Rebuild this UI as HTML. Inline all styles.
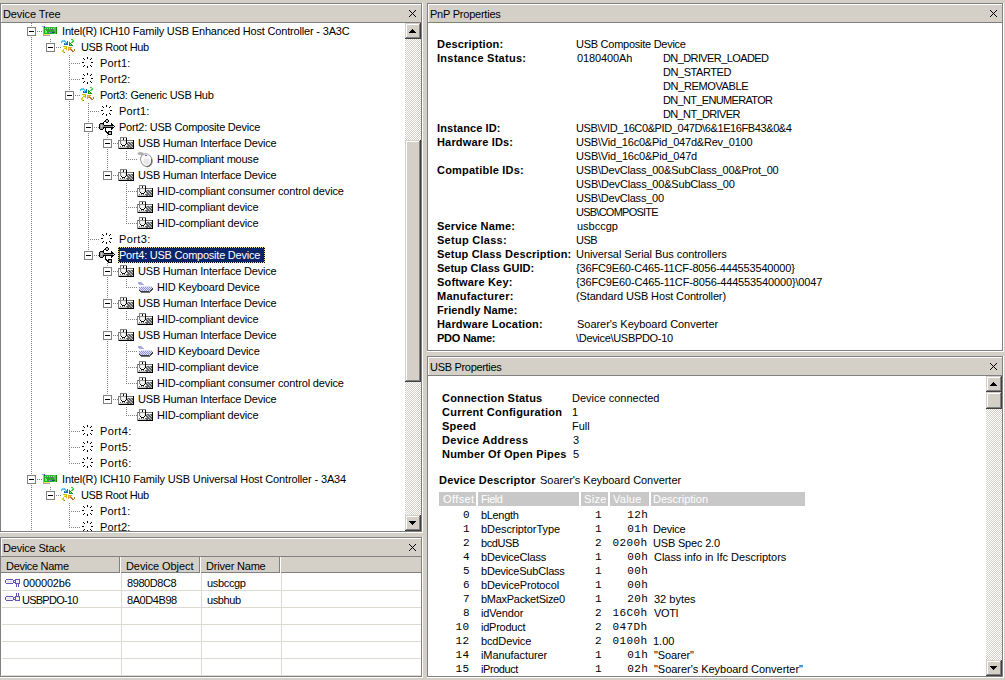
<!DOCTYPE html>
<html><head><meta charset="utf-8"><style>
html,body{margin:0;padding:0}
body{width:1005px;height:680px;overflow:hidden;position:relative;background:#d4d0c8;font-family:'Liberation Sans', sans-serif}
.t,.b,.m{position:absolute;white-space:pre;font-size:11px;line-height:13px}
.t{font-family:'Liberation Sans', sans-serif}
.b{font-family:'Liberation Sans', sans-serif;font-weight:bold}
.m{font-family:'Liberation Mono', monospace}
</style></head><body>
<div style="position:absolute;left:0px;top:3px;width:423px;height:530px;background:#fff;"></div>
<div style="position:absolute;left:0px;top:3px;width:422px;height:529px;background:#808080;"></div>
<div style="position:absolute;left:1px;top:4px;width:421px;height:528px;background:#808080;"></div>
<div style="position:absolute;left:1px;top:4px;width:420px;height:527px;background:#fff;"></div>
<div style="position:absolute;left:2px;top:5px;width:419px;height:526px;background:#fff;"></div>
<div style="position:absolute;left:2px;top:5px;width:419px;height:17px;background:#d4d0c8;"></div>
<div style="position:absolute;left:1px;top:22px;width:420px;height:1px;background:#808080;"></div>
<svg style="position:absolute;left:409px;top:10px" width="7" height="7" shape-rendering="crispEdges"><path d="M0 0h1v1h-1zM1 1h1v1h-1zM2 2h1v1h-1zM3 3h1v1h-1zM4 4h1v1h-1zM5 5h1v1h-1zM6 6h1v1h-1zM6 0h1v1h-1zM5 1h1v1h-1zM4 2h1v1h-1zM2 4h1v1h-1zM1 5h1v1h-1zM0 6h1v1h-1z" fill="#000"/></svg>
<div style="position:absolute;left:0px;top:537px;width:423px;height:141px;background:#fff;"></div>
<div style="position:absolute;left:0px;top:537px;width:422px;height:140px;background:#808080;"></div>
<div style="position:absolute;left:1px;top:538px;width:421px;height:139px;background:#808080;"></div>
<div style="position:absolute;left:1px;top:538px;width:420px;height:138px;background:#fff;"></div>
<div style="position:absolute;left:2px;top:539px;width:419px;height:137px;background:#fff;"></div>
<div style="position:absolute;left:2px;top:539px;width:419px;height:17px;background:#d4d0c8;"></div>
<div style="position:absolute;left:1px;top:556px;width:420px;height:1px;background:#808080;"></div>
<svg style="position:absolute;left:409px;top:544px" width="7" height="7" shape-rendering="crispEdges"><path d="M0 0h1v1h-1zM1 1h1v1h-1zM2 2h1v1h-1zM3 3h1v1h-1zM4 4h1v1h-1zM5 5h1v1h-1zM6 6h1v1h-1zM6 0h1v1h-1zM5 1h1v1h-1zM4 2h1v1h-1zM2 4h1v1h-1zM1 5h1v1h-1zM0 6h1v1h-1z" fill="#000"/></svg>
<div style="position:absolute;left:427px;top:3px;width:577px;height:349px;background:#fff;"></div>
<div style="position:absolute;left:427px;top:3px;width:576px;height:348px;background:#808080;"></div>
<div style="position:absolute;left:428px;top:4px;width:575px;height:347px;background:#808080;"></div>
<div style="position:absolute;left:428px;top:4px;width:574px;height:346px;background:#fff;"></div>
<div style="position:absolute;left:429px;top:5px;width:573px;height:345px;background:#fff;"></div>
<div style="position:absolute;left:429px;top:5px;width:573px;height:17px;background:#d4d0c8;"></div>
<div style="position:absolute;left:428px;top:22px;width:574px;height:1px;background:#808080;"></div>
<svg style="position:absolute;left:990px;top:10px" width="7" height="7" shape-rendering="crispEdges"><path d="M0 0h1v1h-1zM1 1h1v1h-1zM2 2h1v1h-1zM3 3h1v1h-1zM4 4h1v1h-1zM5 5h1v1h-1zM6 6h1v1h-1zM6 0h1v1h-1zM5 1h1v1h-1zM4 2h1v1h-1zM2 4h1v1h-1zM1 5h1v1h-1zM0 6h1v1h-1z" fill="#000"/></svg>
<div style="position:absolute;left:427px;top:356px;width:577px;height:322px;background:#fff;"></div>
<div style="position:absolute;left:427px;top:356px;width:576px;height:321px;background:#808080;"></div>
<div style="position:absolute;left:428px;top:357px;width:575px;height:320px;background:#808080;"></div>
<div style="position:absolute;left:428px;top:357px;width:574px;height:319px;background:#fff;"></div>
<div style="position:absolute;left:429px;top:358px;width:573px;height:318px;background:#fff;"></div>
<div style="position:absolute;left:429px;top:358px;width:573px;height:17px;background:#d4d0c8;"></div>
<div style="position:absolute;left:428px;top:375px;width:574px;height:1px;background:#808080;"></div>
<svg style="position:absolute;left:990px;top:363px" width="7" height="7" shape-rendering="crispEdges"><path d="M0 0h1v1h-1zM1 1h1v1h-1zM2 2h1v1h-1zM3 3h1v1h-1zM4 4h1v1h-1zM5 5h1v1h-1zM6 6h1v1h-1zM6 0h1v1h-1zM5 1h1v1h-1zM4 2h1v1h-1zM2 4h1v1h-1zM1 5h1v1h-1zM0 6h1v1h-1z" fill="#000"/></svg>
<svg style="position:absolute;left:0;top:0;clip-path:inset(23px 0 0 2px)" width="405" height="531" shape-rendering="crispEdges"><path d="M31 23h1v1h-1zM31 25h1v1h-1zM31 27h1v1h-1zM31 29h1v1h-1zM31 31h1v1h-1zM31 31h1v1h-1zM31 33h1v1h-1zM31 35h1v1h-1zM31 37h1v1h-1zM33 31h1v1h-1zM35 31h1v1h-1zM37 31h1v1h-1zM39 31h1v1h-1zM41 31h1v1h-1zM50 39h1v1h-1zM50 41h1v1h-1zM50 43h1v1h-1zM50 45h1v1h-1zM50 47h1v1h-1zM31 39h1v1h-1zM31 41h1v1h-1zM31 43h1v1h-1zM31 45h1v1h-1zM31 47h1v1h-1zM31 49h1v1h-1zM31 51h1v1h-1zM31 53h1v1h-1zM52 47h1v1h-1zM54 47h1v1h-1zM56 47h1v1h-1zM58 47h1v1h-1zM60 47h1v1h-1zM69 55h1v1h-1zM69 57h1v1h-1zM69 59h1v1h-1zM69 61h1v1h-1zM69 63h1v1h-1zM69 63h1v1h-1zM69 65h1v1h-1zM69 67h1v1h-1zM69 69h1v1h-1zM31 55h1v1h-1zM31 57h1v1h-1zM31 59h1v1h-1zM31 61h1v1h-1zM31 63h1v1h-1zM31 65h1v1h-1zM31 67h1v1h-1zM31 69h1v1h-1zM71 63h1v1h-1zM73 63h1v1h-1zM75 63h1v1h-1zM77 63h1v1h-1zM79 63h1v1h-1zM69 71h1v1h-1zM69 73h1v1h-1zM69 75h1v1h-1zM69 77h1v1h-1zM69 79h1v1h-1zM69 79h1v1h-1zM69 81h1v1h-1zM69 83h1v1h-1zM69 85h1v1h-1zM31 71h1v1h-1zM31 73h1v1h-1zM31 75h1v1h-1zM31 77h1v1h-1zM31 79h1v1h-1zM31 81h1v1h-1zM31 83h1v1h-1zM31 85h1v1h-1zM71 79h1v1h-1zM73 79h1v1h-1zM75 79h1v1h-1zM77 79h1v1h-1zM79 79h1v1h-1zM69 87h1v1h-1zM69 89h1v1h-1zM69 91h1v1h-1zM69 93h1v1h-1zM69 95h1v1h-1zM69 95h1v1h-1zM69 97h1v1h-1zM69 99h1v1h-1zM69 101h1v1h-1zM31 87h1v1h-1zM31 89h1v1h-1zM31 91h1v1h-1zM31 93h1v1h-1zM31 95h1v1h-1zM31 97h1v1h-1zM31 99h1v1h-1zM31 101h1v1h-1zM71 95h1v1h-1zM73 95h1v1h-1zM75 95h1v1h-1zM77 95h1v1h-1zM79 95h1v1h-1zM88 103h1v1h-1zM88 105h1v1h-1zM88 107h1v1h-1zM88 109h1v1h-1zM88 111h1v1h-1zM88 111h1v1h-1zM88 113h1v1h-1zM88 115h1v1h-1zM88 117h1v1h-1zM31 103h1v1h-1zM31 105h1v1h-1zM31 107h1v1h-1zM31 109h1v1h-1zM31 111h1v1h-1zM31 113h1v1h-1zM31 115h1v1h-1zM31 117h1v1h-1zM69 103h1v1h-1zM69 105h1v1h-1zM69 107h1v1h-1zM69 109h1v1h-1zM69 111h1v1h-1zM69 113h1v1h-1zM69 115h1v1h-1zM69 117h1v1h-1zM90 111h1v1h-1zM92 111h1v1h-1zM94 111h1v1h-1zM96 111h1v1h-1zM98 111h1v1h-1zM88 119h1v1h-1zM88 121h1v1h-1zM88 123h1v1h-1zM88 125h1v1h-1zM88 127h1v1h-1zM88 127h1v1h-1zM88 129h1v1h-1zM88 131h1v1h-1zM88 133h1v1h-1zM31 119h1v1h-1zM31 121h1v1h-1zM31 123h1v1h-1zM31 125h1v1h-1zM31 127h1v1h-1zM31 129h1v1h-1zM31 131h1v1h-1zM31 133h1v1h-1zM69 119h1v1h-1zM69 121h1v1h-1zM69 123h1v1h-1zM69 125h1v1h-1zM69 127h1v1h-1zM69 129h1v1h-1zM69 131h1v1h-1zM69 133h1v1h-1zM90 127h1v1h-1zM92 127h1v1h-1zM94 127h1v1h-1zM96 127h1v1h-1zM98 127h1v1h-1zM107 135h1v1h-1zM107 137h1v1h-1zM107 139h1v1h-1zM107 141h1v1h-1zM107 143h1v1h-1zM107 143h1v1h-1zM107 145h1v1h-1zM107 147h1v1h-1zM107 149h1v1h-1zM31 135h1v1h-1zM31 137h1v1h-1zM31 139h1v1h-1zM31 141h1v1h-1zM31 143h1v1h-1zM31 145h1v1h-1zM31 147h1v1h-1zM31 149h1v1h-1zM69 135h1v1h-1zM69 137h1v1h-1zM69 139h1v1h-1zM69 141h1v1h-1zM69 143h1v1h-1zM69 145h1v1h-1zM69 147h1v1h-1zM69 149h1v1h-1zM88 135h1v1h-1zM88 137h1v1h-1zM88 139h1v1h-1zM88 141h1v1h-1zM88 143h1v1h-1zM88 145h1v1h-1zM88 147h1v1h-1zM88 149h1v1h-1zM109 143h1v1h-1zM111 143h1v1h-1zM113 143h1v1h-1zM115 143h1v1h-1zM117 143h1v1h-1zM126 151h1v1h-1zM126 153h1v1h-1zM126 155h1v1h-1zM126 157h1v1h-1zM126 159h1v1h-1zM31 151h1v1h-1zM31 153h1v1h-1zM31 155h1v1h-1zM31 157h1v1h-1zM31 159h1v1h-1zM31 161h1v1h-1zM31 163h1v1h-1zM31 165h1v1h-1zM69 151h1v1h-1zM69 153h1v1h-1zM69 155h1v1h-1zM69 157h1v1h-1zM69 159h1v1h-1zM69 161h1v1h-1zM69 163h1v1h-1zM69 165h1v1h-1zM88 151h1v1h-1zM88 153h1v1h-1zM88 155h1v1h-1zM88 157h1v1h-1zM88 159h1v1h-1zM88 161h1v1h-1zM88 163h1v1h-1zM88 165h1v1h-1zM107 151h1v1h-1zM107 153h1v1h-1zM107 155h1v1h-1zM107 157h1v1h-1zM107 159h1v1h-1zM107 161h1v1h-1zM107 163h1v1h-1zM107 165h1v1h-1zM128 159h1v1h-1zM130 159h1v1h-1zM132 159h1v1h-1zM134 159h1v1h-1zM136 159h1v1h-1zM107 167h1v1h-1zM107 169h1v1h-1zM107 171h1v1h-1zM107 173h1v1h-1zM107 175h1v1h-1zM31 167h1v1h-1zM31 169h1v1h-1zM31 171h1v1h-1zM31 173h1v1h-1zM31 175h1v1h-1zM31 177h1v1h-1zM31 179h1v1h-1zM31 181h1v1h-1zM69 167h1v1h-1zM69 169h1v1h-1zM69 171h1v1h-1zM69 173h1v1h-1zM69 175h1v1h-1zM69 177h1v1h-1zM69 179h1v1h-1zM69 181h1v1h-1zM88 167h1v1h-1zM88 169h1v1h-1zM88 171h1v1h-1zM88 173h1v1h-1zM88 175h1v1h-1zM88 177h1v1h-1zM88 179h1v1h-1zM88 181h1v1h-1zM109 175h1v1h-1zM111 175h1v1h-1zM113 175h1v1h-1zM115 175h1v1h-1zM117 175h1v1h-1zM126 183h1v1h-1zM126 185h1v1h-1zM126 187h1v1h-1zM126 189h1v1h-1zM126 191h1v1h-1zM126 191h1v1h-1zM126 193h1v1h-1zM126 195h1v1h-1zM126 197h1v1h-1zM31 183h1v1h-1zM31 185h1v1h-1zM31 187h1v1h-1zM31 189h1v1h-1zM31 191h1v1h-1zM31 193h1v1h-1zM31 195h1v1h-1zM31 197h1v1h-1zM69 183h1v1h-1zM69 185h1v1h-1zM69 187h1v1h-1zM69 189h1v1h-1zM69 191h1v1h-1zM69 193h1v1h-1zM69 195h1v1h-1zM69 197h1v1h-1zM88 183h1v1h-1zM88 185h1v1h-1zM88 187h1v1h-1zM88 189h1v1h-1zM88 191h1v1h-1zM88 193h1v1h-1zM88 195h1v1h-1zM88 197h1v1h-1zM128 191h1v1h-1zM130 191h1v1h-1zM132 191h1v1h-1zM134 191h1v1h-1zM136 191h1v1h-1zM126 199h1v1h-1zM126 201h1v1h-1zM126 203h1v1h-1zM126 205h1v1h-1zM126 207h1v1h-1zM126 207h1v1h-1zM126 209h1v1h-1zM126 211h1v1h-1zM126 213h1v1h-1zM31 199h1v1h-1zM31 201h1v1h-1zM31 203h1v1h-1zM31 205h1v1h-1zM31 207h1v1h-1zM31 209h1v1h-1zM31 211h1v1h-1zM31 213h1v1h-1zM69 199h1v1h-1zM69 201h1v1h-1zM69 203h1v1h-1zM69 205h1v1h-1zM69 207h1v1h-1zM69 209h1v1h-1zM69 211h1v1h-1zM69 213h1v1h-1zM88 199h1v1h-1zM88 201h1v1h-1zM88 203h1v1h-1zM88 205h1v1h-1zM88 207h1v1h-1zM88 209h1v1h-1zM88 211h1v1h-1zM88 213h1v1h-1zM128 207h1v1h-1zM130 207h1v1h-1zM132 207h1v1h-1zM134 207h1v1h-1zM136 207h1v1h-1zM126 215h1v1h-1zM126 217h1v1h-1zM126 219h1v1h-1zM126 221h1v1h-1zM126 223h1v1h-1zM31 215h1v1h-1zM31 217h1v1h-1zM31 219h1v1h-1zM31 221h1v1h-1zM31 223h1v1h-1zM31 225h1v1h-1zM31 227h1v1h-1zM31 229h1v1h-1zM69 215h1v1h-1zM69 217h1v1h-1zM69 219h1v1h-1zM69 221h1v1h-1zM69 223h1v1h-1zM69 225h1v1h-1zM69 227h1v1h-1zM69 229h1v1h-1zM88 215h1v1h-1zM88 217h1v1h-1zM88 219h1v1h-1zM88 221h1v1h-1zM88 223h1v1h-1zM88 225h1v1h-1zM88 227h1v1h-1zM88 229h1v1h-1zM128 223h1v1h-1zM130 223h1v1h-1zM132 223h1v1h-1zM134 223h1v1h-1zM136 223h1v1h-1zM88 231h1v1h-1zM88 233h1v1h-1zM88 235h1v1h-1zM88 237h1v1h-1zM88 239h1v1h-1zM88 239h1v1h-1zM88 241h1v1h-1zM88 243h1v1h-1zM88 245h1v1h-1zM31 231h1v1h-1zM31 233h1v1h-1zM31 235h1v1h-1zM31 237h1v1h-1zM31 239h1v1h-1zM31 241h1v1h-1zM31 243h1v1h-1zM31 245h1v1h-1zM69 231h1v1h-1zM69 233h1v1h-1zM69 235h1v1h-1zM69 237h1v1h-1zM69 239h1v1h-1zM69 241h1v1h-1zM69 243h1v1h-1zM69 245h1v1h-1zM90 239h1v1h-1zM92 239h1v1h-1zM94 239h1v1h-1zM96 239h1v1h-1zM98 239h1v1h-1zM88 247h1v1h-1zM88 249h1v1h-1zM88 251h1v1h-1zM88 253h1v1h-1zM88 255h1v1h-1zM31 247h1v1h-1zM31 249h1v1h-1zM31 251h1v1h-1zM31 253h1v1h-1zM31 255h1v1h-1zM31 257h1v1h-1zM31 259h1v1h-1zM31 261h1v1h-1zM69 247h1v1h-1zM69 249h1v1h-1zM69 251h1v1h-1zM69 253h1v1h-1zM69 255h1v1h-1zM69 257h1v1h-1zM69 259h1v1h-1zM69 261h1v1h-1zM90 255h1v1h-1zM92 255h1v1h-1zM94 255h1v1h-1zM96 255h1v1h-1zM98 255h1v1h-1zM107 263h1v1h-1zM107 265h1v1h-1zM107 267h1v1h-1zM107 269h1v1h-1zM107 271h1v1h-1zM107 271h1v1h-1zM107 273h1v1h-1zM107 275h1v1h-1zM107 277h1v1h-1zM31 263h1v1h-1zM31 265h1v1h-1zM31 267h1v1h-1zM31 269h1v1h-1zM31 271h1v1h-1zM31 273h1v1h-1zM31 275h1v1h-1zM31 277h1v1h-1zM69 263h1v1h-1zM69 265h1v1h-1zM69 267h1v1h-1zM69 269h1v1h-1zM69 271h1v1h-1zM69 273h1v1h-1zM69 275h1v1h-1zM69 277h1v1h-1zM109 271h1v1h-1zM111 271h1v1h-1zM113 271h1v1h-1zM115 271h1v1h-1zM117 271h1v1h-1zM126 279h1v1h-1zM126 281h1v1h-1zM126 283h1v1h-1zM126 285h1v1h-1zM126 287h1v1h-1zM31 279h1v1h-1zM31 281h1v1h-1zM31 283h1v1h-1zM31 285h1v1h-1zM31 287h1v1h-1zM31 289h1v1h-1zM31 291h1v1h-1zM31 293h1v1h-1zM69 279h1v1h-1zM69 281h1v1h-1zM69 283h1v1h-1zM69 285h1v1h-1zM69 287h1v1h-1zM69 289h1v1h-1zM69 291h1v1h-1zM69 293h1v1h-1zM107 279h1v1h-1zM107 281h1v1h-1zM107 283h1v1h-1zM107 285h1v1h-1zM107 287h1v1h-1zM107 289h1v1h-1zM107 291h1v1h-1zM107 293h1v1h-1zM128 287h1v1h-1zM130 287h1v1h-1zM132 287h1v1h-1zM134 287h1v1h-1zM136 287h1v1h-1zM107 295h1v1h-1zM107 297h1v1h-1zM107 299h1v1h-1zM107 301h1v1h-1zM107 303h1v1h-1zM107 303h1v1h-1zM107 305h1v1h-1zM107 307h1v1h-1zM107 309h1v1h-1zM31 295h1v1h-1zM31 297h1v1h-1zM31 299h1v1h-1zM31 301h1v1h-1zM31 303h1v1h-1zM31 305h1v1h-1zM31 307h1v1h-1zM31 309h1v1h-1zM69 295h1v1h-1zM69 297h1v1h-1zM69 299h1v1h-1zM69 301h1v1h-1zM69 303h1v1h-1zM69 305h1v1h-1zM69 307h1v1h-1zM69 309h1v1h-1zM109 303h1v1h-1zM111 303h1v1h-1zM113 303h1v1h-1zM115 303h1v1h-1zM117 303h1v1h-1zM126 311h1v1h-1zM126 313h1v1h-1zM126 315h1v1h-1zM126 317h1v1h-1zM126 319h1v1h-1zM31 311h1v1h-1zM31 313h1v1h-1zM31 315h1v1h-1zM31 317h1v1h-1zM31 319h1v1h-1zM31 321h1v1h-1zM31 323h1v1h-1zM31 325h1v1h-1zM69 311h1v1h-1zM69 313h1v1h-1zM69 315h1v1h-1zM69 317h1v1h-1zM69 319h1v1h-1zM69 321h1v1h-1zM69 323h1v1h-1zM69 325h1v1h-1zM107 311h1v1h-1zM107 313h1v1h-1zM107 315h1v1h-1zM107 317h1v1h-1zM107 319h1v1h-1zM107 321h1v1h-1zM107 323h1v1h-1zM107 325h1v1h-1zM128 319h1v1h-1zM130 319h1v1h-1zM132 319h1v1h-1zM134 319h1v1h-1zM136 319h1v1h-1zM107 327h1v1h-1zM107 329h1v1h-1zM107 331h1v1h-1zM107 333h1v1h-1zM107 335h1v1h-1zM107 335h1v1h-1zM107 337h1v1h-1zM107 339h1v1h-1zM107 341h1v1h-1zM31 327h1v1h-1zM31 329h1v1h-1zM31 331h1v1h-1zM31 333h1v1h-1zM31 335h1v1h-1zM31 337h1v1h-1zM31 339h1v1h-1zM31 341h1v1h-1zM69 327h1v1h-1zM69 329h1v1h-1zM69 331h1v1h-1zM69 333h1v1h-1zM69 335h1v1h-1zM69 337h1v1h-1zM69 339h1v1h-1zM69 341h1v1h-1zM109 335h1v1h-1zM111 335h1v1h-1zM113 335h1v1h-1zM115 335h1v1h-1zM117 335h1v1h-1zM126 343h1v1h-1zM126 345h1v1h-1zM126 347h1v1h-1zM126 349h1v1h-1zM126 351h1v1h-1zM126 351h1v1h-1zM126 353h1v1h-1zM126 355h1v1h-1zM126 357h1v1h-1zM31 343h1v1h-1zM31 345h1v1h-1zM31 347h1v1h-1zM31 349h1v1h-1zM31 351h1v1h-1zM31 353h1v1h-1zM31 355h1v1h-1zM31 357h1v1h-1zM69 343h1v1h-1zM69 345h1v1h-1zM69 347h1v1h-1zM69 349h1v1h-1zM69 351h1v1h-1zM69 353h1v1h-1zM69 355h1v1h-1zM69 357h1v1h-1zM107 343h1v1h-1zM107 345h1v1h-1zM107 347h1v1h-1zM107 349h1v1h-1zM107 351h1v1h-1zM107 353h1v1h-1zM107 355h1v1h-1zM107 357h1v1h-1zM128 351h1v1h-1zM130 351h1v1h-1zM132 351h1v1h-1zM134 351h1v1h-1zM136 351h1v1h-1zM126 359h1v1h-1zM126 361h1v1h-1zM126 363h1v1h-1zM126 365h1v1h-1zM126 367h1v1h-1zM126 367h1v1h-1zM126 369h1v1h-1zM126 371h1v1h-1zM126 373h1v1h-1zM31 359h1v1h-1zM31 361h1v1h-1zM31 363h1v1h-1zM31 365h1v1h-1zM31 367h1v1h-1zM31 369h1v1h-1zM31 371h1v1h-1zM31 373h1v1h-1zM69 359h1v1h-1zM69 361h1v1h-1zM69 363h1v1h-1zM69 365h1v1h-1zM69 367h1v1h-1zM69 369h1v1h-1zM69 371h1v1h-1zM69 373h1v1h-1zM107 359h1v1h-1zM107 361h1v1h-1zM107 363h1v1h-1zM107 365h1v1h-1zM107 367h1v1h-1zM107 369h1v1h-1zM107 371h1v1h-1zM107 373h1v1h-1zM128 367h1v1h-1zM130 367h1v1h-1zM132 367h1v1h-1zM134 367h1v1h-1zM136 367h1v1h-1zM126 375h1v1h-1zM126 377h1v1h-1zM126 379h1v1h-1zM126 381h1v1h-1zM126 383h1v1h-1zM31 375h1v1h-1zM31 377h1v1h-1zM31 379h1v1h-1zM31 381h1v1h-1zM31 383h1v1h-1zM31 385h1v1h-1zM31 387h1v1h-1zM31 389h1v1h-1zM69 375h1v1h-1zM69 377h1v1h-1zM69 379h1v1h-1zM69 381h1v1h-1zM69 383h1v1h-1zM69 385h1v1h-1zM69 387h1v1h-1zM69 389h1v1h-1zM107 375h1v1h-1zM107 377h1v1h-1zM107 379h1v1h-1zM107 381h1v1h-1zM107 383h1v1h-1zM107 385h1v1h-1zM107 387h1v1h-1zM107 389h1v1h-1zM128 383h1v1h-1zM130 383h1v1h-1zM132 383h1v1h-1zM134 383h1v1h-1zM136 383h1v1h-1zM107 391h1v1h-1zM107 393h1v1h-1zM107 395h1v1h-1zM107 397h1v1h-1zM107 399h1v1h-1zM31 391h1v1h-1zM31 393h1v1h-1zM31 395h1v1h-1zM31 397h1v1h-1zM31 399h1v1h-1zM31 401h1v1h-1zM31 403h1v1h-1zM31 405h1v1h-1zM69 391h1v1h-1zM69 393h1v1h-1zM69 395h1v1h-1zM69 397h1v1h-1zM69 399h1v1h-1zM69 401h1v1h-1zM69 403h1v1h-1zM69 405h1v1h-1zM109 399h1v1h-1zM111 399h1v1h-1zM113 399h1v1h-1zM115 399h1v1h-1zM117 399h1v1h-1zM126 407h1v1h-1zM126 409h1v1h-1zM126 411h1v1h-1zM126 413h1v1h-1zM126 415h1v1h-1zM31 407h1v1h-1zM31 409h1v1h-1zM31 411h1v1h-1zM31 413h1v1h-1zM31 415h1v1h-1zM31 417h1v1h-1zM31 419h1v1h-1zM31 421h1v1h-1zM69 407h1v1h-1zM69 409h1v1h-1zM69 411h1v1h-1zM69 413h1v1h-1zM69 415h1v1h-1zM69 417h1v1h-1zM69 419h1v1h-1zM69 421h1v1h-1zM128 415h1v1h-1zM130 415h1v1h-1zM132 415h1v1h-1zM134 415h1v1h-1zM136 415h1v1h-1zM69 423h1v1h-1zM69 425h1v1h-1zM69 427h1v1h-1zM69 429h1v1h-1zM69 431h1v1h-1zM69 431h1v1h-1zM69 433h1v1h-1zM69 435h1v1h-1zM69 437h1v1h-1zM31 423h1v1h-1zM31 425h1v1h-1zM31 427h1v1h-1zM31 429h1v1h-1zM31 431h1v1h-1zM31 433h1v1h-1zM31 435h1v1h-1zM31 437h1v1h-1zM71 431h1v1h-1zM73 431h1v1h-1zM75 431h1v1h-1zM77 431h1v1h-1zM79 431h1v1h-1zM69 439h1v1h-1zM69 441h1v1h-1zM69 443h1v1h-1zM69 445h1v1h-1zM69 447h1v1h-1zM69 447h1v1h-1zM69 449h1v1h-1zM69 451h1v1h-1zM69 453h1v1h-1zM31 439h1v1h-1zM31 441h1v1h-1zM31 443h1v1h-1zM31 445h1v1h-1zM31 447h1v1h-1zM31 449h1v1h-1zM31 451h1v1h-1zM31 453h1v1h-1zM71 447h1v1h-1zM73 447h1v1h-1zM75 447h1v1h-1zM77 447h1v1h-1zM79 447h1v1h-1zM69 455h1v1h-1zM69 457h1v1h-1zM69 459h1v1h-1zM69 461h1v1h-1zM69 463h1v1h-1zM31 455h1v1h-1zM31 457h1v1h-1zM31 459h1v1h-1zM31 461h1v1h-1zM31 463h1v1h-1zM31 465h1v1h-1zM31 467h1v1h-1zM31 469h1v1h-1zM71 463h1v1h-1zM73 463h1v1h-1zM75 463h1v1h-1zM77 463h1v1h-1zM79 463h1v1h-1zM31 471h1v1h-1zM31 473h1v1h-1zM31 475h1v1h-1zM31 477h1v1h-1zM31 479h1v1h-1zM31 479h1v1h-1zM31 481h1v1h-1zM31 483h1v1h-1zM31 485h1v1h-1zM33 479h1v1h-1zM35 479h1v1h-1zM37 479h1v1h-1zM39 479h1v1h-1zM41 479h1v1h-1zM50 487h1v1h-1zM50 489h1v1h-1zM50 491h1v1h-1zM50 493h1v1h-1zM50 495h1v1h-1zM31 487h1v1h-1zM31 489h1v1h-1zM31 491h1v1h-1zM31 493h1v1h-1zM31 495h1v1h-1zM31 497h1v1h-1zM31 499h1v1h-1zM31 501h1v1h-1zM52 495h1v1h-1zM54 495h1v1h-1zM56 495h1v1h-1zM58 495h1v1h-1zM60 495h1v1h-1zM69 503h1v1h-1zM69 505h1v1h-1zM69 507h1v1h-1zM69 509h1v1h-1zM69 511h1v1h-1zM69 511h1v1h-1zM69 513h1v1h-1zM69 515h1v1h-1zM69 517h1v1h-1zM31 503h1v1h-1zM31 505h1v1h-1zM31 507h1v1h-1zM31 509h1v1h-1zM31 511h1v1h-1zM31 513h1v1h-1zM31 515h1v1h-1zM31 517h1v1h-1zM71 511h1v1h-1zM73 511h1v1h-1zM75 511h1v1h-1zM77 511h1v1h-1zM79 511h1v1h-1zM69 519h1v1h-1zM69 521h1v1h-1zM69 523h1v1h-1zM69 525h1v1h-1zM69 527h1v1h-1zM31 519h1v1h-1zM31 521h1v1h-1zM31 523h1v1h-1zM31 525h1v1h-1zM31 527h1v1h-1zM31 529h1v1h-1zM31 531h1v1h-1zM31 533h1v1h-1zM71 527h1v1h-1zM73 527h1v1h-1zM75 527h1v1h-1zM77 527h1v1h-1zM79 527h1v1h-1z" fill="#808080"/><rect x="27" y="27" width="9" height="9" fill="#fff"/><path d="M27 27h9v1h-9zM27 35h9v1h-9zM27 27h1v9h-1zM35 27h1v9h-1z" fill="#808080"/><path d="M29 31h5v1h-5z" fill="#000"/><rect x="46" y="43" width="9" height="9" fill="#fff"/><path d="M46 43h9v1h-9zM46 51h9v1h-9zM46 43h1v9h-1zM54 43h1v9h-1z" fill="#808080"/><path d="M48 47h5v1h-5z" fill="#000"/><rect x="65" y="91" width="9" height="9" fill="#fff"/><path d="M65 91h9v1h-9zM65 99h9v1h-9zM65 91h1v9h-1zM73 91h1v9h-1z" fill="#808080"/><path d="M67 95h5v1h-5z" fill="#000"/><rect x="84" y="123" width="9" height="9" fill="#fff"/><path d="M84 123h9v1h-9zM84 131h9v1h-9zM84 123h1v9h-1zM92 123h1v9h-1z" fill="#808080"/><path d="M86 127h5v1h-5z" fill="#000"/><rect x="103" y="139" width="9" height="9" fill="#fff"/><path d="M103 139h9v1h-9zM103 147h9v1h-9zM103 139h1v9h-1zM111 139h1v9h-1z" fill="#808080"/><path d="M105 143h5v1h-5z" fill="#000"/><rect x="103" y="171" width="9" height="9" fill="#fff"/><path d="M103 171h9v1h-9zM103 179h9v1h-9zM103 171h1v9h-1zM111 171h1v9h-1z" fill="#808080"/><path d="M105 175h5v1h-5z" fill="#000"/><rect x="84" y="251" width="9" height="9" fill="#fff"/><path d="M84 251h9v1h-9zM84 259h9v1h-9zM84 251h1v9h-1zM92 251h1v9h-1z" fill="#808080"/><path d="M86 255h5v1h-5z" fill="#000"/><rect x="103" y="267" width="9" height="9" fill="#fff"/><path d="M103 267h9v1h-9zM103 275h9v1h-9zM103 267h1v9h-1zM111 267h1v9h-1z" fill="#808080"/><path d="M105 271h5v1h-5z" fill="#000"/><rect x="103" y="299" width="9" height="9" fill="#fff"/><path d="M103 299h9v1h-9zM103 307h9v1h-9zM103 299h1v9h-1zM111 299h1v9h-1z" fill="#808080"/><path d="M105 303h5v1h-5z" fill="#000"/><rect x="103" y="331" width="9" height="9" fill="#fff"/><path d="M103 331h9v1h-9zM103 339h9v1h-9zM103 331h1v9h-1zM111 331h1v9h-1z" fill="#808080"/><path d="M105 335h5v1h-5z" fill="#000"/><rect x="103" y="395" width="9" height="9" fill="#fff"/><path d="M103 395h9v1h-9zM103 403h9v1h-9zM103 395h1v9h-1zM111 395h1v9h-1z" fill="#808080"/><path d="M105 399h5v1h-5z" fill="#000"/><rect x="27" y="475" width="9" height="9" fill="#fff"/><path d="M27 475h9v1h-9zM27 483h9v1h-9zM27 475h1v9h-1zM35 475h1v9h-1z" fill="#808080"/><path d="M29 479h5v1h-5z" fill="#000"/><rect x="46" y="491" width="9" height="9" fill="#fff"/><path d="M46 491h9v1h-9zM46 499h9v1h-9zM46 491h1v9h-1zM54 491h1v9h-1z" fill="#808080"/><path d="M48 495h5v1h-5z" fill="#000"/><g transform="translate(42 23)"><path d="M0 3h3v1h-3zM1 3h1v10h-1z" fill="#a8a8e0"/><path d="M2 3h1v1h-1z" fill="#505090"/>
<path d="M2 4h13v7h-13z" fill="#20b020"/><path d="M14 4h1v7h-1z" fill="#009000"/><path d="M3 4h11v1h-11z" fill="#30c030"/><path d="M12 4h2v7h-2z" fill="#50c050"/>
<path d="M4 6h2v1h-2zM7 6h5v1h-5zM11 8h2v1h-2zM6 9h1v1h-1z" fill="#806880"/><path d="M3 5h1v1h-1zM5 5h1v1h-1zM7 5h1v1h-1zM9 5h1v1h-1zM11 5h1v1h-1z" fill="#a0f0a0"/><path d="M3 8h1v2h-1z" fill="#f0a040"/><path d="M3 7h1v1h-1zM4 8h1v2h-1z" fill="#80ff80"/><path d="M7 9h1v1h-1z" fill="#e0a040"/><path d="M2 11h6v1h-6z" fill="#f0f060"/><path d="M1 12h7v1h-7z" fill="#a0a0c0"/><path d="M8 9h1v1h-1z" fill="#4080ff"/><path d="M10 9h3v1h-3z" fill="#107010"/><path d="M2 4h1v1h-1z" fill="#206080"/></g><g transform="translate(61 39)"><path d="M1 1h1v1h-1zM2 1h1v1h-1zM3 1h1v1h-1zM0 2h1v1h-1zM1 2h1v1h-1zM2 2h1v1h-1zM3 2h1v1h-1zM4 2h1v1h-1zM0 3h1v1h-1zM4 3h1v1h-1z" fill="#48c0f0"/><path d="M6 2h1v1h-1zM5 3h1v1h-1zM6 3h1v1h-1zM3 4h1v1h-1zM4 4h1v1h-1zM5 4h1v1h-1zM6 4h1v1h-1zM3 5h1v1h-1zM4 5h1v1h-1zM5 5h1v1h-1zM6 5h1v1h-1z" fill="#1870b8"/><path d="M4 4h1v1h-1zM5 3h1v1h-1z" fill="#58d8ff"/><path d="M2 1h1v1h-1z" fill="#90e8ff"/><path d="M10 0h1v1h-1zM11 0h1v1h-1zM11 1h1v1h-1zM12 1h1v1h-1zM11 2h1v1h-1zM12 2h1v1h-1zM10 3h1v1h-1zM11 3h1v1h-1zM9 4h1v1h-1z" fill="#40d040"/><path d="M8 3h1v1h-1zM8 4h1v1h-1zM9 4h1v1h-1zM8 5h1v1h-1zM9 5h1v1h-1zM10 5h1v1h-1zM8 6h1v1h-1zM9 6h1v1h-1zM10 6h1v1h-1zM11 6h1v1h-1z" fill="#0c9a0c"/><path d="M9 5h1v1h-1z" fill="#70ff70"/><path d="M11 1h1v1h-1z" fill="#90ff90"/><path d="M2 7h1v1h-1zM3 7h1v1h-1zM4 7h1v1h-1zM5 7h1v1h-1zM3 8h1v1h-1zM4 8h1v1h-1zM5 8h1v1h-1zM4 9h1v1h-1zM5 9h1v1h-1zM5 10h1v1h-1z" fill="#c8c010"/><path d="M4 8h1v1h-1zM3 8h1v1h-1z" fill="#ffff40"/><path d="M3 9h1v1h-1zM2 10h1v1h-1zM2 11h1v1h-1zM1 11h1v1h-1zM1 12h1v1h-1zM2 12h1v1h-1zM2 13h1v1h-1z" fill="#d8d020"/><path d="M3 13h1v1h-1z" fill="#809020"/><path d="M7 8h1v1h-1zM8 8h1v1h-1zM9 8h1v1h-1zM10 8h1v1h-1zM7 9h1v1h-1zM8 9h1v1h-1zM9 9h1v1h-1zM7 10h1v1h-1zM8 10h1v1h-1zM7 11h1v1h-1z" fill="#e8a030"/><path d="M8 9h1v1h-1z" fill="#ffc860"/><path d="M9 10h1v1h-1zM10 10h1v1h-1zM10 11h1v1h-1zM11 11h1v1h-1zM11 12h1v1h-1zM12 12h1v1h-1zM13 11h1v1h-1zM13 10h1v1h-1z" fill="#c07020"/></g><g transform="translate(80 55)"><path d="M7 2h1v2h-1zM7 11h1v2h-1zM2 7h2v1h-2zM11 7h2v1h-2zM3 3h1v1h-1zM4 4h1v1h-1zM11 3h1v1h-1zM10 4h1v1h-1zM4 10h1v1h-1zM3 11h1v1h-1zM10 10h1v1h-1zM11 11h1v1h-1z" fill="#000"/></g><g transform="translate(80 71)"><path d="M7 2h1v2h-1zM7 11h1v2h-1zM2 7h2v1h-2zM11 7h2v1h-2zM3 3h1v1h-1zM4 4h1v1h-1zM11 3h1v1h-1zM10 4h1v1h-1zM4 10h1v1h-1zM3 11h1v1h-1zM10 10h1v1h-1zM11 11h1v1h-1z" fill="#000"/></g><g transform="translate(80 87)"><path d="M1 1h1v1h-1zM2 1h1v1h-1zM3 1h1v1h-1zM0 2h1v1h-1zM1 2h1v1h-1zM2 2h1v1h-1zM3 2h1v1h-1zM4 2h1v1h-1zM0 3h1v1h-1zM4 3h1v1h-1z" fill="#48c0f0"/><path d="M6 2h1v1h-1zM5 3h1v1h-1zM6 3h1v1h-1zM3 4h1v1h-1zM4 4h1v1h-1zM5 4h1v1h-1zM6 4h1v1h-1zM3 5h1v1h-1zM4 5h1v1h-1zM5 5h1v1h-1zM6 5h1v1h-1z" fill="#1870b8"/><path d="M4 4h1v1h-1zM5 3h1v1h-1z" fill="#58d8ff"/><path d="M2 1h1v1h-1z" fill="#90e8ff"/><path d="M10 0h1v1h-1zM11 0h1v1h-1zM11 1h1v1h-1zM12 1h1v1h-1zM11 2h1v1h-1zM12 2h1v1h-1zM10 3h1v1h-1zM11 3h1v1h-1zM9 4h1v1h-1z" fill="#40d040"/><path d="M8 3h1v1h-1zM8 4h1v1h-1zM9 4h1v1h-1zM8 5h1v1h-1zM9 5h1v1h-1zM10 5h1v1h-1zM8 6h1v1h-1zM9 6h1v1h-1zM10 6h1v1h-1zM11 6h1v1h-1z" fill="#0c9a0c"/><path d="M9 5h1v1h-1z" fill="#70ff70"/><path d="M11 1h1v1h-1z" fill="#90ff90"/><path d="M2 7h1v1h-1zM3 7h1v1h-1zM4 7h1v1h-1zM5 7h1v1h-1zM3 8h1v1h-1zM4 8h1v1h-1zM5 8h1v1h-1zM4 9h1v1h-1zM5 9h1v1h-1zM5 10h1v1h-1z" fill="#c8c010"/><path d="M4 8h1v1h-1zM3 8h1v1h-1z" fill="#ffff40"/><path d="M3 9h1v1h-1zM2 10h1v1h-1zM2 11h1v1h-1zM1 11h1v1h-1zM1 12h1v1h-1zM2 12h1v1h-1zM2 13h1v1h-1z" fill="#d8d020"/><path d="M3 13h1v1h-1z" fill="#809020"/><path d="M7 8h1v1h-1zM8 8h1v1h-1zM9 8h1v1h-1zM10 8h1v1h-1zM7 9h1v1h-1zM8 9h1v1h-1zM9 9h1v1h-1zM7 10h1v1h-1zM8 10h1v1h-1zM7 11h1v1h-1z" fill="#e8a030"/><path d="M8 9h1v1h-1z" fill="#ffc860"/><path d="M9 10h1v1h-1zM10 10h1v1h-1zM10 11h1v1h-1zM11 11h1v1h-1zM11 12h1v1h-1zM12 12h1v1h-1zM13 11h1v1h-1zM13 10h1v1h-1z" fill="#c07020"/></g><g transform="translate(99 103)"><path d="M7 2h1v2h-1zM7 11h1v2h-1zM2 7h2v1h-2zM11 7h2v1h-2zM3 3h1v1h-1zM4 4h1v1h-1zM11 3h1v1h-1zM10 4h1v1h-1zM4 10h1v1h-1zM3 11h1v1h-1zM10 10h1v1h-1zM11 11h1v1h-1z" fill="#000"/></g><g transform="translate(99 119)"><path d="M0 5h1v5h-1zM1 4h3v1h-3zM1 10h3v1h-3zM4 3h1v3h-1zM4 8h1v2h-1zM5 2h1v1h-1zM6 1h1v1h-1zM5 6h7v1h-7zM4 8h8v1h-8zM12 4h1v7h-1zM13 5h1v2h-1zM13 8h1v2h-1zM14 6h1v1h-1zM14 8h1v1h-1zM15 7h1v1h-1zM7 0h2v1h-2zM6 1h1v2h-1zM9 1h1v2h-1zM7 3h2v1h-2zM6 9h1v4h-1zM7 12h1v2h-1zM8 13h1v2h-1zM9 12h4v4h-4z" fill="#000"/><path d="M1 5h3v5h-3zM4 6h1v2h-1z" fill="#a0a0a0"/><path d="M5 7h8v1h-8zM13 7h1v1h-1z" fill="#909090"/><path d="M7 1h2v2h-2zM10 13h2v2h-2z" fill="#c0c0c0"/><path d="M2 6h1v2h-1z" fill="#d0d0d0"/></g><g transform="translate(118 135)"><path d="M0 5h15v1h-15z" fill="#707070"/><path d="M0 5h1v9h-1z" fill="#808080"/><path d="M15 5h1v9h-1zM1 13h15v1h-15z" fill="#000"/><path d="M1 6h14v7h-14z" fill="#c8c8c8"/><path d="M1 6h8v6h-8zM9 6h6v1h-6z" fill="#fafafa"/><path d="M9 8h1v1h-1zM9 9h1v1h-1zM9 11h1v1h-1zM9 12h1v1h-1zM10 7h1v1h-1zM10 9h1v1h-1zM10 10h1v1h-1zM10 12h1v1h-1zM11 7h1v1h-1zM11 8h1v1h-1zM11 10h1v1h-1zM11 11h1v1h-1zM12 8h1v1h-1zM12 9h1v1h-1zM12 11h1v1h-1zM12 12h1v1h-1zM13 7h1v1h-1zM13 9h1v1h-1zM13 10h1v1h-1zM13 12h1v1h-1zM14 7h1v1h-1zM14 8h1v1h-1zM14 10h1v1h-1zM14 11h1v1h-1z" fill="#606060"/><path d="M2 11h1v1h-1zM4 11h1v1h-1zM6 11h1v1h-1zM8 11h1v1h-1zM10 11h1v1h-1zM12 11h1v1h-1z" fill="#707070"/><path d="M2 2h7v1h-7zM2 2h1v7h-1z" fill="#808080"/><path d="M8 3h1v6h-1zM5 3h1v2h-1z" fill="#000"/><path d="M3 3h2v2h-2zM6 3h2v2h-2z" fill="#fff"/><path d="M3 5h5v1h-5z" fill="#a0a0a0"/><path d="M3 6h5v3h-5z" fill="#e8e8e8"/><path d="M4 7h3v1h-3z" fill="#ffffff"/><path d="M3 9h1v1h-1zM4 10h1v1h-1zM5 10h1v1h-1zM6 10h1v1h-1zM7 9h1v1h-1z" fill="#000"/></g><g transform="translate(137 151)"><g shape-rendering="geometricPrecision"><ellipse cx="3.5" cy="2.5" rx="3" ry="1.6" fill="#b0b0b0"/><ellipse cx="9.4" cy="9.2" rx="5.6" ry="6.7" transform="rotate(-28 9.4 9.2)" fill="#fbfbfb" stroke="#9a9a9a" stroke-width="1"/><path d="M14.5 8 C15.5 12 13 15.5 9.5 15.6" fill="none" stroke="#606060" stroke-width="1.1"/><ellipse cx="9.6" cy="10.5" rx="3.2" ry="3.3" fill="#e8e8e8"/></g><path d="M8 4h2v1h-2z" fill="#5a5ac8"/></g><g transform="translate(118 167)"><path d="M0 5h15v1h-15z" fill="#707070"/><path d="M0 5h1v9h-1z" fill="#808080"/><path d="M15 5h1v9h-1zM1 13h15v1h-15z" fill="#000"/><path d="M1 6h14v7h-14z" fill="#c8c8c8"/><path d="M1 6h8v6h-8zM9 6h6v1h-6z" fill="#fafafa"/><path d="M9 8h1v1h-1zM9 9h1v1h-1zM9 11h1v1h-1zM9 12h1v1h-1zM10 7h1v1h-1zM10 9h1v1h-1zM10 10h1v1h-1zM10 12h1v1h-1zM11 7h1v1h-1zM11 8h1v1h-1zM11 10h1v1h-1zM11 11h1v1h-1zM12 8h1v1h-1zM12 9h1v1h-1zM12 11h1v1h-1zM12 12h1v1h-1zM13 7h1v1h-1zM13 9h1v1h-1zM13 10h1v1h-1zM13 12h1v1h-1zM14 7h1v1h-1zM14 8h1v1h-1zM14 10h1v1h-1zM14 11h1v1h-1z" fill="#606060"/><path d="M2 11h1v1h-1zM4 11h1v1h-1zM6 11h1v1h-1zM8 11h1v1h-1zM10 11h1v1h-1zM12 11h1v1h-1z" fill="#707070"/><path d="M2 2h7v1h-7zM2 2h1v7h-1z" fill="#808080"/><path d="M8 3h1v6h-1zM5 3h1v2h-1z" fill="#000"/><path d="M3 3h2v2h-2zM6 3h2v2h-2z" fill="#fff"/><path d="M3 5h5v1h-5z" fill="#a0a0a0"/><path d="M3 6h5v3h-5z" fill="#e8e8e8"/><path d="M4 7h3v1h-3z" fill="#ffffff"/><path d="M3 9h1v1h-1zM4 10h1v1h-1zM5 10h1v1h-1zM6 10h1v1h-1zM7 9h1v1h-1z" fill="#000"/></g><g transform="translate(137 183)"><path d="M0 5h15v1h-15z" fill="#707070"/><path d="M0 5h1v9h-1z" fill="#808080"/><path d="M15 5h1v9h-1zM1 13h15v1h-15z" fill="#000"/><path d="M1 6h14v7h-14z" fill="#c8c8c8"/><path d="M1 6h8v6h-8zM9 6h6v1h-6z" fill="#fafafa"/><path d="M9 8h1v1h-1zM9 9h1v1h-1zM9 11h1v1h-1zM9 12h1v1h-1zM10 7h1v1h-1zM10 9h1v1h-1zM10 10h1v1h-1zM10 12h1v1h-1zM11 7h1v1h-1zM11 8h1v1h-1zM11 10h1v1h-1zM11 11h1v1h-1zM12 8h1v1h-1zM12 9h1v1h-1zM12 11h1v1h-1zM12 12h1v1h-1zM13 7h1v1h-1zM13 9h1v1h-1zM13 10h1v1h-1zM13 12h1v1h-1zM14 7h1v1h-1zM14 8h1v1h-1zM14 10h1v1h-1zM14 11h1v1h-1z" fill="#606060"/><path d="M2 11h1v1h-1zM4 11h1v1h-1zM6 11h1v1h-1zM8 11h1v1h-1zM10 11h1v1h-1zM12 11h1v1h-1z" fill="#707070"/><path d="M2 2h7v1h-7zM2 2h1v7h-1z" fill="#808080"/><path d="M8 3h1v6h-1zM5 3h1v2h-1z" fill="#000"/><path d="M3 3h2v2h-2zM6 3h2v2h-2z" fill="#fff"/><path d="M3 5h5v1h-5z" fill="#a0a0a0"/><path d="M3 6h5v3h-5z" fill="#e8e8e8"/><path d="M4 7h3v1h-3z" fill="#ffffff"/><path d="M3 9h1v1h-1zM4 10h1v1h-1zM5 10h1v1h-1zM6 10h1v1h-1zM7 9h1v1h-1z" fill="#000"/></g><g transform="translate(137 199)"><path d="M0 5h15v1h-15z" fill="#707070"/><path d="M0 5h1v9h-1z" fill="#808080"/><path d="M15 5h1v9h-1zM1 13h15v1h-15z" fill="#000"/><path d="M1 6h14v7h-14z" fill="#c8c8c8"/><path d="M1 6h8v6h-8zM9 6h6v1h-6z" fill="#fafafa"/><path d="M9 8h1v1h-1zM9 9h1v1h-1zM9 11h1v1h-1zM9 12h1v1h-1zM10 7h1v1h-1zM10 9h1v1h-1zM10 10h1v1h-1zM10 12h1v1h-1zM11 7h1v1h-1zM11 8h1v1h-1zM11 10h1v1h-1zM11 11h1v1h-1zM12 8h1v1h-1zM12 9h1v1h-1zM12 11h1v1h-1zM12 12h1v1h-1zM13 7h1v1h-1zM13 9h1v1h-1zM13 10h1v1h-1zM13 12h1v1h-1zM14 7h1v1h-1zM14 8h1v1h-1zM14 10h1v1h-1zM14 11h1v1h-1z" fill="#606060"/><path d="M2 11h1v1h-1zM4 11h1v1h-1zM6 11h1v1h-1zM8 11h1v1h-1zM10 11h1v1h-1zM12 11h1v1h-1z" fill="#707070"/><path d="M2 2h7v1h-7zM2 2h1v7h-1z" fill="#808080"/><path d="M8 3h1v6h-1zM5 3h1v2h-1z" fill="#000"/><path d="M3 3h2v2h-2zM6 3h2v2h-2z" fill="#fff"/><path d="M3 5h5v1h-5z" fill="#a0a0a0"/><path d="M3 6h5v3h-5z" fill="#e8e8e8"/><path d="M4 7h3v1h-3z" fill="#ffffff"/><path d="M3 9h1v1h-1zM4 10h1v1h-1zM5 10h1v1h-1zM6 10h1v1h-1zM7 9h1v1h-1z" fill="#000"/></g><g transform="translate(137 215)"><path d="M0 5h15v1h-15z" fill="#707070"/><path d="M0 5h1v9h-1z" fill="#808080"/><path d="M15 5h1v9h-1zM1 13h15v1h-15z" fill="#000"/><path d="M1 6h14v7h-14z" fill="#c8c8c8"/><path d="M1 6h8v6h-8zM9 6h6v1h-6z" fill="#fafafa"/><path d="M9 8h1v1h-1zM9 9h1v1h-1zM9 11h1v1h-1zM9 12h1v1h-1zM10 7h1v1h-1zM10 9h1v1h-1zM10 10h1v1h-1zM10 12h1v1h-1zM11 7h1v1h-1zM11 8h1v1h-1zM11 10h1v1h-1zM11 11h1v1h-1zM12 8h1v1h-1zM12 9h1v1h-1zM12 11h1v1h-1zM12 12h1v1h-1zM13 7h1v1h-1zM13 9h1v1h-1zM13 10h1v1h-1zM13 12h1v1h-1zM14 7h1v1h-1zM14 8h1v1h-1zM14 10h1v1h-1zM14 11h1v1h-1z" fill="#606060"/><path d="M2 11h1v1h-1zM4 11h1v1h-1zM6 11h1v1h-1zM8 11h1v1h-1zM10 11h1v1h-1zM12 11h1v1h-1z" fill="#707070"/><path d="M2 2h7v1h-7zM2 2h1v7h-1z" fill="#808080"/><path d="M8 3h1v6h-1zM5 3h1v2h-1z" fill="#000"/><path d="M3 3h2v2h-2zM6 3h2v2h-2z" fill="#fff"/><path d="M3 5h5v1h-5z" fill="#a0a0a0"/><path d="M3 6h5v3h-5z" fill="#e8e8e8"/><path d="M4 7h3v1h-3z" fill="#ffffff"/><path d="M3 9h1v1h-1zM4 10h1v1h-1zM5 10h1v1h-1zM6 10h1v1h-1zM7 9h1v1h-1z" fill="#000"/></g><g transform="translate(99 231)"><path d="M7 2h1v2h-1zM7 11h1v2h-1zM2 7h2v1h-2zM11 7h2v1h-2zM3 3h1v1h-1zM4 4h1v1h-1zM11 3h1v1h-1zM10 4h1v1h-1zM4 10h1v1h-1zM3 11h1v1h-1zM10 10h1v1h-1zM11 11h1v1h-1z" fill="#000"/></g><g transform="translate(99 247)"><path d="M0 5h1v5h-1zM1 4h3v1h-3zM1 10h3v1h-3zM4 3h1v3h-1zM4 8h1v2h-1zM5 2h1v1h-1zM6 1h1v1h-1zM5 6h7v1h-7zM4 8h8v1h-8zM12 4h1v7h-1zM13 5h1v2h-1zM13 8h1v2h-1zM14 6h1v1h-1zM14 8h1v1h-1zM15 7h1v1h-1zM7 0h2v1h-2zM6 1h1v2h-1zM9 1h1v2h-1zM7 3h2v1h-2zM6 9h1v4h-1zM7 12h1v2h-1zM8 13h1v2h-1zM9 12h4v4h-4z" fill="#000"/><path d="M1 5h3v5h-3zM4 6h1v2h-1z" fill="#a0a0a0"/><path d="M5 7h8v1h-8zM13 7h1v1h-1z" fill="#909090"/><path d="M7 1h2v2h-2zM10 13h2v2h-2z" fill="#c0c0c0"/><path d="M2 6h1v2h-1z" fill="#d0d0d0"/></g><g transform="translate(118 263)"><path d="M0 5h15v1h-15z" fill="#707070"/><path d="M0 5h1v9h-1z" fill="#808080"/><path d="M15 5h1v9h-1zM1 13h15v1h-15z" fill="#000"/><path d="M1 6h14v7h-14z" fill="#c8c8c8"/><path d="M1 6h8v6h-8zM9 6h6v1h-6z" fill="#fafafa"/><path d="M9 8h1v1h-1zM9 9h1v1h-1zM9 11h1v1h-1zM9 12h1v1h-1zM10 7h1v1h-1zM10 9h1v1h-1zM10 10h1v1h-1zM10 12h1v1h-1zM11 7h1v1h-1zM11 8h1v1h-1zM11 10h1v1h-1zM11 11h1v1h-1zM12 8h1v1h-1zM12 9h1v1h-1zM12 11h1v1h-1zM12 12h1v1h-1zM13 7h1v1h-1zM13 9h1v1h-1zM13 10h1v1h-1zM13 12h1v1h-1zM14 7h1v1h-1zM14 8h1v1h-1zM14 10h1v1h-1zM14 11h1v1h-1z" fill="#606060"/><path d="M2 11h1v1h-1zM4 11h1v1h-1zM6 11h1v1h-1zM8 11h1v1h-1zM10 11h1v1h-1zM12 11h1v1h-1z" fill="#707070"/><path d="M2 2h7v1h-7zM2 2h1v7h-1z" fill="#808080"/><path d="M8 3h1v6h-1zM5 3h1v2h-1z" fill="#000"/><path d="M3 3h2v2h-2zM6 3h2v2h-2z" fill="#fff"/><path d="M3 5h5v1h-5z" fill="#a0a0a0"/><path d="M3 6h5v3h-5z" fill="#e8e8e8"/><path d="M4 7h3v1h-3z" fill="#ffffff"/><path d="M3 9h1v1h-1zM4 10h1v1h-1zM5 10h1v1h-1zM6 10h1v1h-1zM7 9h1v1h-1z" fill="#000"/></g><g transform="translate(137 279)"><path d="M1 3h1v1h-1zM2 3h1v1h-1zM3 3h1v1h-1zM1 4h1v1h-1zM2 4h1v1h-1zM3 4h1v1h-1zM4 4h1v1h-1zM2 5h1v1h-1zM3 5h1v1h-1zM4 5h1v1h-1zM5 5h1v1h-1zM6 5h1v1h-1z" fill="#a8a8e8"/><path d="M4 3h1v1h-1zM5 4h1v1h-1z" fill="#c8c8f0"/><path d="M2 8h2v-1h11v1h1v3h-1v1h-2v1h-10v-1h-1z" fill="#e0e0ff"/><path d="M2 8h1v1h-1zM4 8h1v1h-1zM6 8h1v1h-1zM8 8h1v1h-1zM10 8h1v1h-1zM12 8h1v1h-1zM14 8h1v1h-1zM3 9h1v1h-1zM5 9h1v1h-1zM7 9h1v1h-1zM9 9h1v1h-1zM11 9h1v1h-1zM13 9h1v1h-1zM2 10h1v1h-1zM4 10h1v1h-1zM6 10h1v1h-1zM8 10h1v1h-1zM10 10h1v1h-1zM12 10h1v1h-1zM14 10h1v1h-1zM3 11h1v1h-1zM5 11h1v1h-1zM7 11h1v1h-1zM9 11h1v1h-1zM11 11h1v1h-1z" fill="#8c8ce0"/><path d="M3 12h10v1h-10zM13 11h2v1h-2zM15 9h1v2h-1zM2 11h1v1h-1zM14 10h1v1h-1z" fill="#404040"/><path d="M4 13h9v1h-9zM12 12h2v1h-2z" fill="#707070"/></g><g transform="translate(118 295)"><path d="M0 5h15v1h-15z" fill="#707070"/><path d="M0 5h1v9h-1z" fill="#808080"/><path d="M15 5h1v9h-1zM1 13h15v1h-15z" fill="#000"/><path d="M1 6h14v7h-14z" fill="#c8c8c8"/><path d="M1 6h8v6h-8zM9 6h6v1h-6z" fill="#fafafa"/><path d="M9 8h1v1h-1zM9 9h1v1h-1zM9 11h1v1h-1zM9 12h1v1h-1zM10 7h1v1h-1zM10 9h1v1h-1zM10 10h1v1h-1zM10 12h1v1h-1zM11 7h1v1h-1zM11 8h1v1h-1zM11 10h1v1h-1zM11 11h1v1h-1zM12 8h1v1h-1zM12 9h1v1h-1zM12 11h1v1h-1zM12 12h1v1h-1zM13 7h1v1h-1zM13 9h1v1h-1zM13 10h1v1h-1zM13 12h1v1h-1zM14 7h1v1h-1zM14 8h1v1h-1zM14 10h1v1h-1zM14 11h1v1h-1z" fill="#606060"/><path d="M2 11h1v1h-1zM4 11h1v1h-1zM6 11h1v1h-1zM8 11h1v1h-1zM10 11h1v1h-1zM12 11h1v1h-1z" fill="#707070"/><path d="M2 2h7v1h-7zM2 2h1v7h-1z" fill="#808080"/><path d="M8 3h1v6h-1zM5 3h1v2h-1z" fill="#000"/><path d="M3 3h2v2h-2zM6 3h2v2h-2z" fill="#fff"/><path d="M3 5h5v1h-5z" fill="#a0a0a0"/><path d="M3 6h5v3h-5z" fill="#e8e8e8"/><path d="M4 7h3v1h-3z" fill="#ffffff"/><path d="M3 9h1v1h-1zM4 10h1v1h-1zM5 10h1v1h-1zM6 10h1v1h-1zM7 9h1v1h-1z" fill="#000"/></g><g transform="translate(137 311)"><path d="M0 5h15v1h-15z" fill="#707070"/><path d="M0 5h1v9h-1z" fill="#808080"/><path d="M15 5h1v9h-1zM1 13h15v1h-15z" fill="#000"/><path d="M1 6h14v7h-14z" fill="#c8c8c8"/><path d="M1 6h8v6h-8zM9 6h6v1h-6z" fill="#fafafa"/><path d="M9 8h1v1h-1zM9 9h1v1h-1zM9 11h1v1h-1zM9 12h1v1h-1zM10 7h1v1h-1zM10 9h1v1h-1zM10 10h1v1h-1zM10 12h1v1h-1zM11 7h1v1h-1zM11 8h1v1h-1zM11 10h1v1h-1zM11 11h1v1h-1zM12 8h1v1h-1zM12 9h1v1h-1zM12 11h1v1h-1zM12 12h1v1h-1zM13 7h1v1h-1zM13 9h1v1h-1zM13 10h1v1h-1zM13 12h1v1h-1zM14 7h1v1h-1zM14 8h1v1h-1zM14 10h1v1h-1zM14 11h1v1h-1z" fill="#606060"/><path d="M2 11h1v1h-1zM4 11h1v1h-1zM6 11h1v1h-1zM8 11h1v1h-1zM10 11h1v1h-1zM12 11h1v1h-1z" fill="#707070"/><path d="M2 2h7v1h-7zM2 2h1v7h-1z" fill="#808080"/><path d="M8 3h1v6h-1zM5 3h1v2h-1z" fill="#000"/><path d="M3 3h2v2h-2zM6 3h2v2h-2z" fill="#fff"/><path d="M3 5h5v1h-5z" fill="#a0a0a0"/><path d="M3 6h5v3h-5z" fill="#e8e8e8"/><path d="M4 7h3v1h-3z" fill="#ffffff"/><path d="M3 9h1v1h-1zM4 10h1v1h-1zM5 10h1v1h-1zM6 10h1v1h-1zM7 9h1v1h-1z" fill="#000"/></g><g transform="translate(118 327)"><path d="M0 5h15v1h-15z" fill="#707070"/><path d="M0 5h1v9h-1z" fill="#808080"/><path d="M15 5h1v9h-1zM1 13h15v1h-15z" fill="#000"/><path d="M1 6h14v7h-14z" fill="#c8c8c8"/><path d="M1 6h8v6h-8zM9 6h6v1h-6z" fill="#fafafa"/><path d="M9 8h1v1h-1zM9 9h1v1h-1zM9 11h1v1h-1zM9 12h1v1h-1zM10 7h1v1h-1zM10 9h1v1h-1zM10 10h1v1h-1zM10 12h1v1h-1zM11 7h1v1h-1zM11 8h1v1h-1zM11 10h1v1h-1zM11 11h1v1h-1zM12 8h1v1h-1zM12 9h1v1h-1zM12 11h1v1h-1zM12 12h1v1h-1zM13 7h1v1h-1zM13 9h1v1h-1zM13 10h1v1h-1zM13 12h1v1h-1zM14 7h1v1h-1zM14 8h1v1h-1zM14 10h1v1h-1zM14 11h1v1h-1z" fill="#606060"/><path d="M2 11h1v1h-1zM4 11h1v1h-1zM6 11h1v1h-1zM8 11h1v1h-1zM10 11h1v1h-1zM12 11h1v1h-1z" fill="#707070"/><path d="M2 2h7v1h-7zM2 2h1v7h-1z" fill="#808080"/><path d="M8 3h1v6h-1zM5 3h1v2h-1z" fill="#000"/><path d="M3 3h2v2h-2zM6 3h2v2h-2z" fill="#fff"/><path d="M3 5h5v1h-5z" fill="#a0a0a0"/><path d="M3 6h5v3h-5z" fill="#e8e8e8"/><path d="M4 7h3v1h-3z" fill="#ffffff"/><path d="M3 9h1v1h-1zM4 10h1v1h-1zM5 10h1v1h-1zM6 10h1v1h-1zM7 9h1v1h-1z" fill="#000"/></g><g transform="translate(137 343)"><path d="M1 3h1v1h-1zM2 3h1v1h-1zM3 3h1v1h-1zM1 4h1v1h-1zM2 4h1v1h-1zM3 4h1v1h-1zM4 4h1v1h-1zM2 5h1v1h-1zM3 5h1v1h-1zM4 5h1v1h-1zM5 5h1v1h-1zM6 5h1v1h-1z" fill="#a8a8e8"/><path d="M4 3h1v1h-1zM5 4h1v1h-1z" fill="#c8c8f0"/><path d="M2 8h2v-1h11v1h1v3h-1v1h-2v1h-10v-1h-1z" fill="#e0e0ff"/><path d="M2 8h1v1h-1zM4 8h1v1h-1zM6 8h1v1h-1zM8 8h1v1h-1zM10 8h1v1h-1zM12 8h1v1h-1zM14 8h1v1h-1zM3 9h1v1h-1zM5 9h1v1h-1zM7 9h1v1h-1zM9 9h1v1h-1zM11 9h1v1h-1zM13 9h1v1h-1zM2 10h1v1h-1zM4 10h1v1h-1zM6 10h1v1h-1zM8 10h1v1h-1zM10 10h1v1h-1zM12 10h1v1h-1zM14 10h1v1h-1zM3 11h1v1h-1zM5 11h1v1h-1zM7 11h1v1h-1zM9 11h1v1h-1zM11 11h1v1h-1z" fill="#8c8ce0"/><path d="M3 12h10v1h-10zM13 11h2v1h-2zM15 9h1v2h-1zM2 11h1v1h-1zM14 10h1v1h-1z" fill="#404040"/><path d="M4 13h9v1h-9zM12 12h2v1h-2z" fill="#707070"/></g><g transform="translate(137 359)"><path d="M0 5h15v1h-15z" fill="#707070"/><path d="M0 5h1v9h-1z" fill="#808080"/><path d="M15 5h1v9h-1zM1 13h15v1h-15z" fill="#000"/><path d="M1 6h14v7h-14z" fill="#c8c8c8"/><path d="M1 6h8v6h-8zM9 6h6v1h-6z" fill="#fafafa"/><path d="M9 8h1v1h-1zM9 9h1v1h-1zM9 11h1v1h-1zM9 12h1v1h-1zM10 7h1v1h-1zM10 9h1v1h-1zM10 10h1v1h-1zM10 12h1v1h-1zM11 7h1v1h-1zM11 8h1v1h-1zM11 10h1v1h-1zM11 11h1v1h-1zM12 8h1v1h-1zM12 9h1v1h-1zM12 11h1v1h-1zM12 12h1v1h-1zM13 7h1v1h-1zM13 9h1v1h-1zM13 10h1v1h-1zM13 12h1v1h-1zM14 7h1v1h-1zM14 8h1v1h-1zM14 10h1v1h-1zM14 11h1v1h-1z" fill="#606060"/><path d="M2 11h1v1h-1zM4 11h1v1h-1zM6 11h1v1h-1zM8 11h1v1h-1zM10 11h1v1h-1zM12 11h1v1h-1z" fill="#707070"/><path d="M2 2h7v1h-7zM2 2h1v7h-1z" fill="#808080"/><path d="M8 3h1v6h-1zM5 3h1v2h-1z" fill="#000"/><path d="M3 3h2v2h-2zM6 3h2v2h-2z" fill="#fff"/><path d="M3 5h5v1h-5z" fill="#a0a0a0"/><path d="M3 6h5v3h-5z" fill="#e8e8e8"/><path d="M4 7h3v1h-3z" fill="#ffffff"/><path d="M3 9h1v1h-1zM4 10h1v1h-1zM5 10h1v1h-1zM6 10h1v1h-1zM7 9h1v1h-1z" fill="#000"/></g><g transform="translate(137 375)"><path d="M0 5h15v1h-15z" fill="#707070"/><path d="M0 5h1v9h-1z" fill="#808080"/><path d="M15 5h1v9h-1zM1 13h15v1h-15z" fill="#000"/><path d="M1 6h14v7h-14z" fill="#c8c8c8"/><path d="M1 6h8v6h-8zM9 6h6v1h-6z" fill="#fafafa"/><path d="M9 8h1v1h-1zM9 9h1v1h-1zM9 11h1v1h-1zM9 12h1v1h-1zM10 7h1v1h-1zM10 9h1v1h-1zM10 10h1v1h-1zM10 12h1v1h-1zM11 7h1v1h-1zM11 8h1v1h-1zM11 10h1v1h-1zM11 11h1v1h-1zM12 8h1v1h-1zM12 9h1v1h-1zM12 11h1v1h-1zM12 12h1v1h-1zM13 7h1v1h-1zM13 9h1v1h-1zM13 10h1v1h-1zM13 12h1v1h-1zM14 7h1v1h-1zM14 8h1v1h-1zM14 10h1v1h-1zM14 11h1v1h-1z" fill="#606060"/><path d="M2 11h1v1h-1zM4 11h1v1h-1zM6 11h1v1h-1zM8 11h1v1h-1zM10 11h1v1h-1zM12 11h1v1h-1z" fill="#707070"/><path d="M2 2h7v1h-7zM2 2h1v7h-1z" fill="#808080"/><path d="M8 3h1v6h-1zM5 3h1v2h-1z" fill="#000"/><path d="M3 3h2v2h-2zM6 3h2v2h-2z" fill="#fff"/><path d="M3 5h5v1h-5z" fill="#a0a0a0"/><path d="M3 6h5v3h-5z" fill="#e8e8e8"/><path d="M4 7h3v1h-3z" fill="#ffffff"/><path d="M3 9h1v1h-1zM4 10h1v1h-1zM5 10h1v1h-1zM6 10h1v1h-1zM7 9h1v1h-1z" fill="#000"/></g><g transform="translate(118 391)"><path d="M0 5h15v1h-15z" fill="#707070"/><path d="M0 5h1v9h-1z" fill="#808080"/><path d="M15 5h1v9h-1zM1 13h15v1h-15z" fill="#000"/><path d="M1 6h14v7h-14z" fill="#c8c8c8"/><path d="M1 6h8v6h-8zM9 6h6v1h-6z" fill="#fafafa"/><path d="M9 8h1v1h-1zM9 9h1v1h-1zM9 11h1v1h-1zM9 12h1v1h-1zM10 7h1v1h-1zM10 9h1v1h-1zM10 10h1v1h-1zM10 12h1v1h-1zM11 7h1v1h-1zM11 8h1v1h-1zM11 10h1v1h-1zM11 11h1v1h-1zM12 8h1v1h-1zM12 9h1v1h-1zM12 11h1v1h-1zM12 12h1v1h-1zM13 7h1v1h-1zM13 9h1v1h-1zM13 10h1v1h-1zM13 12h1v1h-1zM14 7h1v1h-1zM14 8h1v1h-1zM14 10h1v1h-1zM14 11h1v1h-1z" fill="#606060"/><path d="M2 11h1v1h-1zM4 11h1v1h-1zM6 11h1v1h-1zM8 11h1v1h-1zM10 11h1v1h-1zM12 11h1v1h-1z" fill="#707070"/><path d="M2 2h7v1h-7zM2 2h1v7h-1z" fill="#808080"/><path d="M8 3h1v6h-1zM5 3h1v2h-1z" fill="#000"/><path d="M3 3h2v2h-2zM6 3h2v2h-2z" fill="#fff"/><path d="M3 5h5v1h-5z" fill="#a0a0a0"/><path d="M3 6h5v3h-5z" fill="#e8e8e8"/><path d="M4 7h3v1h-3z" fill="#ffffff"/><path d="M3 9h1v1h-1zM4 10h1v1h-1zM5 10h1v1h-1zM6 10h1v1h-1zM7 9h1v1h-1z" fill="#000"/></g><g transform="translate(137 407)"><path d="M0 5h15v1h-15z" fill="#707070"/><path d="M0 5h1v9h-1z" fill="#808080"/><path d="M15 5h1v9h-1zM1 13h15v1h-15z" fill="#000"/><path d="M1 6h14v7h-14z" fill="#c8c8c8"/><path d="M1 6h8v6h-8zM9 6h6v1h-6z" fill="#fafafa"/><path d="M9 8h1v1h-1zM9 9h1v1h-1zM9 11h1v1h-1zM9 12h1v1h-1zM10 7h1v1h-1zM10 9h1v1h-1zM10 10h1v1h-1zM10 12h1v1h-1zM11 7h1v1h-1zM11 8h1v1h-1zM11 10h1v1h-1zM11 11h1v1h-1zM12 8h1v1h-1zM12 9h1v1h-1zM12 11h1v1h-1zM12 12h1v1h-1zM13 7h1v1h-1zM13 9h1v1h-1zM13 10h1v1h-1zM13 12h1v1h-1zM14 7h1v1h-1zM14 8h1v1h-1zM14 10h1v1h-1zM14 11h1v1h-1z" fill="#606060"/><path d="M2 11h1v1h-1zM4 11h1v1h-1zM6 11h1v1h-1zM8 11h1v1h-1zM10 11h1v1h-1zM12 11h1v1h-1z" fill="#707070"/><path d="M2 2h7v1h-7zM2 2h1v7h-1z" fill="#808080"/><path d="M8 3h1v6h-1zM5 3h1v2h-1z" fill="#000"/><path d="M3 3h2v2h-2zM6 3h2v2h-2z" fill="#fff"/><path d="M3 5h5v1h-5z" fill="#a0a0a0"/><path d="M3 6h5v3h-5z" fill="#e8e8e8"/><path d="M4 7h3v1h-3z" fill="#ffffff"/><path d="M3 9h1v1h-1zM4 10h1v1h-1zM5 10h1v1h-1zM6 10h1v1h-1zM7 9h1v1h-1z" fill="#000"/></g><g transform="translate(80 423)"><path d="M7 2h1v2h-1zM7 11h1v2h-1zM2 7h2v1h-2zM11 7h2v1h-2zM3 3h1v1h-1zM4 4h1v1h-1zM11 3h1v1h-1zM10 4h1v1h-1zM4 10h1v1h-1zM3 11h1v1h-1zM10 10h1v1h-1zM11 11h1v1h-1z" fill="#000"/></g><g transform="translate(80 439)"><path d="M7 2h1v2h-1zM7 11h1v2h-1zM2 7h2v1h-2zM11 7h2v1h-2zM3 3h1v1h-1zM4 4h1v1h-1zM11 3h1v1h-1zM10 4h1v1h-1zM4 10h1v1h-1zM3 11h1v1h-1zM10 10h1v1h-1zM11 11h1v1h-1z" fill="#000"/></g><g transform="translate(80 455)"><path d="M7 2h1v2h-1zM7 11h1v2h-1zM2 7h2v1h-2zM11 7h2v1h-2zM3 3h1v1h-1zM4 4h1v1h-1zM11 3h1v1h-1zM10 4h1v1h-1zM4 10h1v1h-1zM3 11h1v1h-1zM10 10h1v1h-1zM11 11h1v1h-1z" fill="#000"/></g><g transform="translate(42 471)"><path d="M0 3h3v1h-3zM1 3h1v10h-1z" fill="#a8a8e0"/><path d="M2 3h1v1h-1z" fill="#505090"/>
<path d="M2 4h13v7h-13z" fill="#20b020"/><path d="M14 4h1v7h-1z" fill="#009000"/><path d="M3 4h11v1h-11z" fill="#30c030"/><path d="M12 4h2v7h-2z" fill="#50c050"/>
<path d="M4 6h2v1h-2zM7 6h5v1h-5zM11 8h2v1h-2zM6 9h1v1h-1z" fill="#806880"/><path d="M3 5h1v1h-1zM5 5h1v1h-1zM7 5h1v1h-1zM9 5h1v1h-1zM11 5h1v1h-1z" fill="#a0f0a0"/><path d="M3 8h1v2h-1z" fill="#f0a040"/><path d="M3 7h1v1h-1zM4 8h1v2h-1z" fill="#80ff80"/><path d="M7 9h1v1h-1z" fill="#e0a040"/><path d="M2 11h6v1h-6z" fill="#f0f060"/><path d="M1 12h7v1h-7z" fill="#a0a0c0"/><path d="M8 9h1v1h-1z" fill="#4080ff"/><path d="M10 9h3v1h-3z" fill="#107010"/><path d="M2 4h1v1h-1z" fill="#206080"/></g><g transform="translate(61 487)"><path d="M1 1h1v1h-1zM2 1h1v1h-1zM3 1h1v1h-1zM0 2h1v1h-1zM1 2h1v1h-1zM2 2h1v1h-1zM3 2h1v1h-1zM4 2h1v1h-1zM0 3h1v1h-1zM4 3h1v1h-1z" fill="#48c0f0"/><path d="M6 2h1v1h-1zM5 3h1v1h-1zM6 3h1v1h-1zM3 4h1v1h-1zM4 4h1v1h-1zM5 4h1v1h-1zM6 4h1v1h-1zM3 5h1v1h-1zM4 5h1v1h-1zM5 5h1v1h-1zM6 5h1v1h-1z" fill="#1870b8"/><path d="M4 4h1v1h-1zM5 3h1v1h-1z" fill="#58d8ff"/><path d="M2 1h1v1h-1z" fill="#90e8ff"/><path d="M10 0h1v1h-1zM11 0h1v1h-1zM11 1h1v1h-1zM12 1h1v1h-1zM11 2h1v1h-1zM12 2h1v1h-1zM10 3h1v1h-1zM11 3h1v1h-1zM9 4h1v1h-1z" fill="#40d040"/><path d="M8 3h1v1h-1zM8 4h1v1h-1zM9 4h1v1h-1zM8 5h1v1h-1zM9 5h1v1h-1zM10 5h1v1h-1zM8 6h1v1h-1zM9 6h1v1h-1zM10 6h1v1h-1zM11 6h1v1h-1z" fill="#0c9a0c"/><path d="M9 5h1v1h-1z" fill="#70ff70"/><path d="M11 1h1v1h-1z" fill="#90ff90"/><path d="M2 7h1v1h-1zM3 7h1v1h-1zM4 7h1v1h-1zM5 7h1v1h-1zM3 8h1v1h-1zM4 8h1v1h-1zM5 8h1v1h-1zM4 9h1v1h-1zM5 9h1v1h-1zM5 10h1v1h-1z" fill="#c8c010"/><path d="M4 8h1v1h-1zM3 8h1v1h-1z" fill="#ffff40"/><path d="M3 9h1v1h-1zM2 10h1v1h-1zM2 11h1v1h-1zM1 11h1v1h-1zM1 12h1v1h-1zM2 12h1v1h-1zM2 13h1v1h-1z" fill="#d8d020"/><path d="M3 13h1v1h-1z" fill="#809020"/><path d="M7 8h1v1h-1zM8 8h1v1h-1zM9 8h1v1h-1zM10 8h1v1h-1zM7 9h1v1h-1zM8 9h1v1h-1zM9 9h1v1h-1zM7 10h1v1h-1zM8 10h1v1h-1zM7 11h1v1h-1z" fill="#e8a030"/><path d="M8 9h1v1h-1z" fill="#ffc860"/><path d="M9 10h1v1h-1zM10 10h1v1h-1zM10 11h1v1h-1zM11 11h1v1h-1zM11 12h1v1h-1zM12 12h1v1h-1zM13 11h1v1h-1zM13 10h1v1h-1z" fill="#c07020"/></g><g transform="translate(80 503)"><path d="M7 2h1v2h-1zM7 11h1v2h-1zM2 7h2v1h-2zM11 7h2v1h-2zM3 3h1v1h-1zM4 4h1v1h-1zM11 3h1v1h-1zM10 4h1v1h-1zM4 10h1v1h-1zM3 11h1v1h-1zM10 10h1v1h-1zM11 11h1v1h-1z" fill="#000"/></g><g transform="translate(80 519)"><path d="M7 2h1v2h-1zM7 11h1v2h-1zM2 7h2v1h-2zM11 7h2v1h-2zM3 3h1v1h-1zM4 4h1v1h-1zM11 3h1v1h-1zM10 4h1v1h-1zM4 10h1v1h-1zM3 11h1v1h-1zM10 10h1v1h-1zM11 11h1v1h-1z" fill="#000"/></g></svg>
<div style="position:absolute;left:118px;top:247px;width:147px;height:16px;background:#0a246a;"></div>
<svg style="position:absolute;left:118px;top:247px" width="147" height="16" shape-rendering="crispEdges"><rect x="0.5" y="0.5" width="146" height="15" fill="none" stroke="#000" stroke-width="1"/><path d="M0 0h1v1h-1zM1 15h1v1h-1zM2 0h1v1h-1zM3 15h1v1h-1zM4 0h1v1h-1zM5 15h1v1h-1zM6 0h1v1h-1zM7 15h1v1h-1zM8 0h1v1h-1zM9 15h1v1h-1zM10 0h1v1h-1zM11 15h1v1h-1zM12 0h1v1h-1zM13 15h1v1h-1zM14 0h1v1h-1zM15 15h1v1h-1zM16 0h1v1h-1zM17 15h1v1h-1zM18 0h1v1h-1zM19 15h1v1h-1zM20 0h1v1h-1zM21 15h1v1h-1zM22 0h1v1h-1zM23 15h1v1h-1zM24 0h1v1h-1zM25 15h1v1h-1zM26 0h1v1h-1zM27 15h1v1h-1zM28 0h1v1h-1zM29 15h1v1h-1zM30 0h1v1h-1zM31 15h1v1h-1zM32 0h1v1h-1zM33 15h1v1h-1zM34 0h1v1h-1zM35 15h1v1h-1zM36 0h1v1h-1zM37 15h1v1h-1zM38 0h1v1h-1zM39 15h1v1h-1zM40 0h1v1h-1zM41 15h1v1h-1zM42 0h1v1h-1zM43 15h1v1h-1zM44 0h1v1h-1zM45 15h1v1h-1zM46 0h1v1h-1zM47 15h1v1h-1zM48 0h1v1h-1zM49 15h1v1h-1zM50 0h1v1h-1zM51 15h1v1h-1zM52 0h1v1h-1zM53 15h1v1h-1zM54 0h1v1h-1zM55 15h1v1h-1zM56 0h1v1h-1zM57 15h1v1h-1zM58 0h1v1h-1zM59 15h1v1h-1zM60 0h1v1h-1zM61 15h1v1h-1zM62 0h1v1h-1zM63 15h1v1h-1zM64 0h1v1h-1zM65 15h1v1h-1zM66 0h1v1h-1zM67 15h1v1h-1zM68 0h1v1h-1zM69 15h1v1h-1zM70 0h1v1h-1zM71 15h1v1h-1zM72 0h1v1h-1zM73 15h1v1h-1zM74 0h1v1h-1zM75 15h1v1h-1zM76 0h1v1h-1zM77 15h1v1h-1zM78 0h1v1h-1zM79 15h1v1h-1zM80 0h1v1h-1zM81 15h1v1h-1zM82 0h1v1h-1zM83 15h1v1h-1zM84 0h1v1h-1zM85 15h1v1h-1zM86 0h1v1h-1zM87 15h1v1h-1zM88 0h1v1h-1zM89 15h1v1h-1zM90 0h1v1h-1zM91 15h1v1h-1zM92 0h1v1h-1zM93 15h1v1h-1zM94 0h1v1h-1zM95 15h1v1h-1zM96 0h1v1h-1zM97 15h1v1h-1zM98 0h1v1h-1zM99 15h1v1h-1zM100 0h1v1h-1zM101 15h1v1h-1zM102 0h1v1h-1zM103 15h1v1h-1zM104 0h1v1h-1zM105 15h1v1h-1zM106 0h1v1h-1zM107 15h1v1h-1zM108 0h1v1h-1zM109 15h1v1h-1zM110 0h1v1h-1zM111 15h1v1h-1zM112 0h1v1h-1zM113 15h1v1h-1zM114 0h1v1h-1zM115 15h1v1h-1zM116 0h1v1h-1zM117 15h1v1h-1zM118 0h1v1h-1zM119 15h1v1h-1zM120 0h1v1h-1zM121 15h1v1h-1zM122 0h1v1h-1zM123 15h1v1h-1zM124 0h1v1h-1zM125 15h1v1h-1zM126 0h1v1h-1zM127 15h1v1h-1zM128 0h1v1h-1zM129 15h1v1h-1zM130 0h1v1h-1zM131 15h1v1h-1zM132 0h1v1h-1zM133 15h1v1h-1zM134 0h1v1h-1zM135 15h1v1h-1zM136 0h1v1h-1zM137 15h1v1h-1zM138 0h1v1h-1zM139 15h1v1h-1zM140 0h1v1h-1zM141 15h1v1h-1zM142 0h1v1h-1zM143 15h1v1h-1zM144 0h1v1h-1zM145 15h1v1h-1zM146 0h1v1h-1zM0 2h1v1h-1zM146 2h1v1h-1zM0 4h1v1h-1zM146 4h1v1h-1zM0 6h1v1h-1zM146 6h1v1h-1zM0 8h1v1h-1zM146 8h1v1h-1zM0 10h1v1h-1zM146 10h1v1h-1zM0 12h1v1h-1zM146 12h1v1h-1zM0 14h1v1h-1zM146 14h1v1h-1z" fill="#f5dc8c"/></svg>
<div style="position:absolute;left:405px;top:23px;width:16px;height:508px;background-color:#fff;background-image:linear-gradient(45deg,#d4d0c8 25%,transparent 25%,transparent 75%,#d4d0c8 75%),linear-gradient(45deg,#d4d0c8 25%,transparent 25%,transparent 75%,#d4d0c8 75%);background-size:2px 2px;background-position:0 0,1px 1px"></div>
<div style="position:absolute;left:405px;top:23px;width:16px;height:16px;background:#404040;"></div>
<div style="position:absolute;left:405px;top:23px;width:15px;height:15px;background:#d4d0c8;"></div>
<div style="position:absolute;left:406px;top:24px;width:14px;height:14px;background:#808080;"></div>
<div style="position:absolute;left:406px;top:24px;width:13px;height:13px;background:#fff;"></div>
<div style="position:absolute;left:407px;top:25px;width:12px;height:12px;background:#d4d0c8;"></div>
<div style="position:absolute;left:405px;top:515px;width:16px;height:16px;background:#404040;"></div>
<div style="position:absolute;left:405px;top:515px;width:15px;height:15px;background:#d4d0c8;"></div>
<div style="position:absolute;left:406px;top:516px;width:14px;height:14px;background:#808080;"></div>
<div style="position:absolute;left:406px;top:516px;width:13px;height:13px;background:#fff;"></div>
<div style="position:absolute;left:407px;top:517px;width:12px;height:12px;background:#d4d0c8;"></div>
<div style="position:absolute;left:405px;top:140px;width:16px;height:242px;background:#404040;"></div>
<div style="position:absolute;left:405px;top:140px;width:15px;height:241px;background:#d4d0c8;"></div>
<div style="position:absolute;left:406px;top:141px;width:14px;height:240px;background:#808080;"></div>
<div style="position:absolute;left:406px;top:141px;width:13px;height:239px;background:#fff;"></div>
<div style="position:absolute;left:407px;top:142px;width:12px;height:238px;background:#d4d0c8;"></div>
<svg style="position:absolute;left:409px;top:29px" width="7" height="4" shape-rendering="crispEdges"><path d="M3 0h1v1h-1zM2 1h3v1h-3zM1 2h5v1h-5zM0 3h7v1h-7z" fill="#000"/></svg>
<svg style="position:absolute;left:409px;top:521px" width="7" height="4" shape-rendering="crispEdges"><path d="M0 0h7v1h-7zM1 1h5v1h-5zM2 2h3v1h-3zM3 3h1v1h-1z" fill="#000"/></svg>
<div style="position:absolute;left:1px;top:557px;width:420px;height:16px;background:#d4d0c8;"></div>
<div style="position:absolute;left:119px;top:557px;width:1px;height:16px;background:#808080;"></div>
<div style="position:absolute;left:120px;top:557px;width:1px;height:16px;background:#fff;"></div>
<div style="position:absolute;left:199px;top:557px;width:1px;height:16px;background:#808080;"></div>
<div style="position:absolute;left:200px;top:557px;width:1px;height:16px;background:#fff;"></div>
<div style="position:absolute;left:279px;top:557px;width:1px;height:16px;background:#808080;"></div>
<div style="position:absolute;left:280px;top:557px;width:1px;height:16px;background:#fff;"></div>
<div style="position:absolute;left:1px;top:572px;width:420px;height:1px;background:#808080;"></div>
<div style="position:absolute;left:120px;top:572px;width:1px;height:1px;background:#fff;"></div>
<div style="position:absolute;left:200px;top:572px;width:1px;height:1px;background:#fff;"></div>
<div style="position:absolute;left:280px;top:572px;width:1px;height:1px;background:#fff;"></div>
<div style="position:absolute;left:2px;top:590px;width:419px;height:1px;background:#dedad2;"></div>
<div style="position:absolute;left:2px;top:607px;width:419px;height:1px;background:#dedad2;"></div>
<div style="position:absolute;left:2px;top:624px;width:419px;height:1px;background:#dedad2;"></div>
<div style="position:absolute;left:2px;top:641px;width:419px;height:1px;background:#dedad2;"></div>
<div style="position:absolute;left:2px;top:658px;width:419px;height:1px;background:#dedad2;"></div>
<div style="position:absolute;left:2px;top:675px;width:419px;height:1px;background:#dedad2;"></div>
<div style="position:absolute;left:121px;top:573px;width:1px;height:103px;background:#dedad2;"></div>
<div style="position:absolute;left:201px;top:573px;width:1px;height:103px;background:#dedad2;"></div>
<div style="position:absolute;left:281px;top:573px;width:1px;height:103px;background:#dedad2;"></div>
<svg style="position:absolute;left:0;top:0" width="21" height="610" shape-rendering="crispEdges"><path d="M6 579h7v1h-7zM6 583h7v1h-7zM5 580h1v3h-1zM13 580h1v3h-1zM14 580h1v1h-1zM14 582h1v1h-1zM15 579h5v1h-5zM15 583h5v1h-5zM15 579h1v5h-1zM19 579h1v5h-1zM16 584h1v3h-1zM18 584h1v3h-1z" fill="#6454b4"/><path d="M6 580h7v3h-7zM16 580h3v3h-3z" fill="#f4f0fa"/><path d="M7 581h5v1h-5z" fill="#e4dcf0"/><path d="M6 596h7v1h-7zM6 600h7v1h-7zM5 597h1v3h-1zM13 597h1v3h-1zM14 597h1v1h-1zM14 599h1v1h-1zM15 596h5v1h-5zM15 600h5v1h-5zM15 596h1v5h-1zM19 596h1v5h-1zM16 593h1v3h-1zM18 593h1v3h-1z" fill="#6454b4"/><path d="M6 597h7v3h-7zM16 597h3v3h-3z" fill="#f4f0fa"/><path d="M7 598h5v1h-5z" fill="#e4dcf0"/></svg>
<div style="position:absolute;left:439px;top:492px;width:37px;height:14px;background:#c8c8c8;"></div>
<div style="position:absolute;left:478px;top:492px;width:101px;height:14px;background:#c8c8c8;"></div>
<div style="position:absolute;left:581px;top:492px;width:27px;height:14px;background:#c8c8c8;"></div>
<div style="position:absolute;left:610px;top:492px;width:39px;height:14px;background:#c8c8c8;"></div>
<div style="position:absolute;left:651px;top:492px;width:154px;height:14px;background:#c8c8c8;"></div>
<div style="position:absolute;left:986px;top:376px;width:16px;height:300px;background-color:#fff;background-image:linear-gradient(45deg,#d4d0c8 25%,transparent 25%,transparent 75%,#d4d0c8 75%),linear-gradient(45deg,#d4d0c8 25%,transparent 25%,transparent 75%,#d4d0c8 75%);background-size:2px 2px;background-position:0 0,1px 1px"></div>
<div style="position:absolute;left:986px;top:376px;width:16px;height:16px;background:#404040;"></div>
<div style="position:absolute;left:986px;top:376px;width:15px;height:15px;background:#d4d0c8;"></div>
<div style="position:absolute;left:987px;top:377px;width:14px;height:14px;background:#808080;"></div>
<div style="position:absolute;left:987px;top:377px;width:13px;height:13px;background:#fff;"></div>
<div style="position:absolute;left:988px;top:378px;width:12px;height:12px;background:#d4d0c8;"></div>
<div style="position:absolute;left:986px;top:660px;width:16px;height:16px;background:#404040;"></div>
<div style="position:absolute;left:986px;top:660px;width:15px;height:15px;background:#d4d0c8;"></div>
<div style="position:absolute;left:987px;top:661px;width:14px;height:14px;background:#808080;"></div>
<div style="position:absolute;left:987px;top:661px;width:13px;height:13px;background:#fff;"></div>
<div style="position:absolute;left:988px;top:662px;width:12px;height:12px;background:#d4d0c8;"></div>
<div style="position:absolute;left:986px;top:392px;width:16px;height:17px;background:#404040;"></div>
<div style="position:absolute;left:986px;top:392px;width:15px;height:16px;background:#d4d0c8;"></div>
<div style="position:absolute;left:987px;top:393px;width:14px;height:15px;background:#808080;"></div>
<div style="position:absolute;left:987px;top:393px;width:13px;height:14px;background:#fff;"></div>
<div style="position:absolute;left:988px;top:394px;width:12px;height:13px;background:#d4d0c8;"></div>
<svg style="position:absolute;left:990px;top:382px" width="7" height="4" shape-rendering="crispEdges"><path d="M3 0h1v1h-1zM2 1h3v1h-3zM1 2h5v1h-5zM0 3h7v1h-7z" fill="#000"/></svg>
<svg style="position:absolute;left:990px;top:666px" width="7" height="4" shape-rendering="crispEdges"><path d="M0 0h7v1h-7zM1 1h5v1h-5zM2 2h3v1h-3zM3 3h1v1h-1z" fill="#000"/></svg>
<div style="position:absolute;left:2px;top:23px;width:403px;height:508px;overflow:hidden"><div style="position:absolute;left:-2px;top:-23px;width:1005px;height:680px"><div class="t" style="left:62px;top:25px;color:#000;letter-spacing:-0.179px">Intel(R) ICH10 Family USB Enhanced Host Controller - 3A3C</div>
<div class="t" style="left:81px;top:41px;color:#000;letter-spacing:-0.364px">USB Root Hub</div>
<div class="t" style="left:100px;top:57px;color:#000;letter-spacing:0.200px">Port1:</div>
<div class="t" style="left:100px;top:73px;color:#000;letter-spacing:0.200px">Port2:</div>
<div class="t" style="left:100px;top:89px;color:#000;letter-spacing:-0.286px">Port3: Generic USB Hub</div>
<div class="t" style="left:119px;top:105px;color:#000;letter-spacing:0.200px">Port1:</div>
<div class="t" style="left:119px;top:121px;color:#000;letter-spacing:-0.231px">Port2: USB Composite Device</div>
<div class="t" style="left:138px;top:137px;color:#000;letter-spacing:-0.200px">USB Human Interface Device</div>
<div class="t" style="left:157px;top:153px;color:#000;letter-spacing:-0.222px">HID-compliant mouse</div>
<div class="t" style="left:138px;top:169px;color:#000;letter-spacing:-0.200px">USB Human Interface Device</div>
<div class="t" style="left:157px;top:185px;color:#000;letter-spacing:-0.139px">HID-compliant consumer control device</div>
<div class="t" style="left:157px;top:201px;color:#000;letter-spacing:-0.158px">HID-compliant device</div>
<div class="t" style="left:157px;top:217px;color:#000;letter-spacing:-0.158px">HID-compliant device</div>
<div class="t" style="left:119px;top:233px;color:#000;letter-spacing:0.400px">Port3:</div>
<div class="t" style="left:119px;top:249px;color:#fff;letter-spacing:-0.231px">Port4: USB Composite Device</div>
<div class="t" style="left:138px;top:265px;color:#000;letter-spacing:-0.200px">USB Human Interface Device</div>
<div class="t" style="left:157px;top:281px;color:#000;letter-spacing:-0.167px">HID Keyboard Device</div>
<div class="t" style="left:138px;top:297px;color:#000;letter-spacing:-0.200px">USB Human Interface Device</div>
<div class="t" style="left:157px;top:313px;color:#000;letter-spacing:-0.158px">HID-compliant device</div>
<div class="t" style="left:138px;top:329px;color:#000;letter-spacing:-0.200px">USB Human Interface Device</div>
<div class="t" style="left:157px;top:345px;color:#000;letter-spacing:-0.167px">HID Keyboard Device</div>
<div class="t" style="left:157px;top:361px;color:#000;letter-spacing:-0.158px">HID-compliant device</div>
<div class="t" style="left:157px;top:377px;color:#000;letter-spacing:-0.139px">HID-compliant consumer control device</div>
<div class="t" style="left:138px;top:393px;color:#000;letter-spacing:-0.200px">USB Human Interface Device</div>
<div class="t" style="left:157px;top:409px;color:#000;letter-spacing:-0.158px">HID-compliant device</div>
<div class="t" style="left:100px;top:425px;color:#000;letter-spacing:0.400px">Port4:</div>
<div class="t" style="left:100px;top:441px;color:#000;letter-spacing:0.400px">Port5:</div>
<div class="t" style="left:100px;top:457px;color:#000;letter-spacing:0.400px">Port6:</div>
<div class="t" style="left:62px;top:473px;color:#000;letter-spacing:-0.140px">Intel(R) ICH10 Family USB Universal Host Controller - 3A34</div>
<div class="t" style="left:81px;top:489px;color:#000;letter-spacing:-0.364px">USB Root Hub</div>
<div class="t" style="left:100px;top:505px;color:#000;letter-spacing:0.200px">Port1:</div>
<div class="t" style="left:100px;top:521px;color:#000;letter-spacing:0.200px">Port2:</div></div></div>
<div class="t" style="left:3px;top:8px;color:#000;letter-spacing:-0.100px">Device Tree</div>
<div class="t" style="left:3px;top:542px;color:#000;letter-spacing:-0.182px">Device Stack</div>
<div class="t" style="left:430px;top:8px;color:#000;letter-spacing:-0.231px">PnP Properties</div>
<div class="t" style="left:430px;top:361px;color:#000;letter-spacing:-0.308px">USB Properties</div>
<div class="t" style="left:6px;top:560px;color:#000;letter-spacing:-0.300px">Device Name</div>
<div class="t" style="left:126px;top:560px;color:#000;letter-spacing:-0.083px">Device Object</div>
<div class="t" style="left:206px;top:560px;color:#000;letter-spacing:-0.200px">Driver Name</div>
<div class="t" style="left:23px;top:577px;color:#000;letter-spacing:-0.143px">000002b6</div>
<div class="t" style="left:127px;top:577px;color:#000;letter-spacing:-0.429px">8980D8C8</div>
<div class="t" style="left:207px;top:577px;color:#000;letter-spacing:-0.333px">usbccgp</div>
<div class="t" style="left:22px;top:594px;color:#000;letter-spacing:-0.750px">USBPDO-10</div>
<div class="t" style="left:127px;top:594px;color:#000;letter-spacing:-0.429px">8A0D4B98</div>
<div class="t" style="left:207px;top:594px;color:#000;letter-spacing:-0.400px">usbhub</div>
<div class="b" style="left:437px;top:38px;color:#000;letter-spacing:0.182px">Description:</div>
<div class="t" style="left:576px;top:38px;color:#000;letter-spacing:-0.263px">USB Composite Device</div>
<div class="b" style="left:437px;top:52px;color:#000;letter-spacing:0.267px">Instance Status:</div>
<div class="t" style="left:577px;top:52px;color:#000;letter-spacing:-0.125px">0180400Ah</div>
<div class="b" style="left:437px;top:122px;color:#000;letter-spacing:0.091px">Instance ID:</div>
<div class="t" style="left:576px;top:122px;color:#000;letter-spacing:-0.400px">USB\VID_16C0&amp;PID_047D\6&amp;1E16FB43&amp;0&amp;4</div>
<div class="b" style="left:437px;top:136px;color:#000;letter-spacing:0.167px">Hardware IDs:</div>
<div class="t" style="left:576px;top:136px;color:#000;letter-spacing:-0.207px">USB\Vid_16c0&amp;Pid_047d&amp;Rev_0100</div>
<div class="t" style="left:576px;top:150px;color:#000;letter-spacing:-0.200px">USB\Vid_16c0&amp;Pid_047d</div>
<div class="b" style="left:437px;top:164px;color:#000;letter-spacing:0.214px">Compatible IDs:</div>
<div class="t" style="left:576px;top:164px;color:#000;letter-spacing:-0.206px">USB\DevClass_00&amp;SubClass_00&amp;Prot_00</div>
<div class="t" style="left:576px;top:178px;color:#000;letter-spacing:-0.192px">USB\DevClass_00&amp;SubClass_00</div>
<div class="t" style="left:576px;top:192px;color:#000;letter-spacing:-0.214px">USB\DevClass_00</div>
<div class="t" style="left:576px;top:206px;color:#000;letter-spacing:-0.750px">USB\COMPOSITE</div>
<div class="b" style="left:437px;top:220px;color:#000;letter-spacing:0.167px">Service Name:</div>
<div class="t" style="left:577px;top:220px;color:#000;letter-spacing:0.000px">usbccgp</div>
<div class="b" style="left:437px;top:234px;color:#000;letter-spacing:0.273px">Setup Class:</div>
<div class="t" style="left:576px;top:234px;color:#000;letter-spacing:-0.500px">USB</div>
<div class="b" style="left:437px;top:248px;color:#000;letter-spacing:0.174px">Setup Class Description:</div>
<div class="t" style="left:576px;top:248px;color:#000;letter-spacing:-0.065px">Universal Serial Bus controllers</div>
<div class="b" style="left:437px;top:262px;color:#000;letter-spacing:0.000px">Setup Class GUID:</div>
<div class="t" style="left:576px;top:262px;color:#000;letter-spacing:-0.162px">{36FC9E60-C465-11CF-8056-444553540000}</div>
<div class="b" style="left:437px;top:276px;color:#000;letter-spacing:0.167px">Software Key:</div>
<div class="t" style="left:576px;top:276px;color:#000;letter-spacing:-0.143px">{36FC9E60-C465-11CF-8056-444553540000}\0047</div>
<div class="b" style="left:437px;top:290px;color:#000;letter-spacing:0.250px">Manufacturer:</div>
<div class="t" style="left:576px;top:290px;color:#000;letter-spacing:-0.138px">(Standard USB Host Controller)</div>
<div class="b" style="left:437px;top:304px;color:#000;letter-spacing:0.077px">Friendly Name:</div>
<div class="b" style="left:437px;top:318px;color:#000;letter-spacing:0.176px">Hardware Location:</div>
<div class="t" style="left:577px;top:318px;color:#000;letter-spacing:-0.038px">Soarer&#x27;s Keyboard Converter</div>
<div class="b" style="left:437px;top:332px;color:#000;letter-spacing:-0.250px">PDO Name:</div>
<div class="t" style="left:576px;top:332px;color:#000;letter-spacing:-0.312px">\Device\USBPDO-10</div>
<div class="t" style="left:663px;top:52px;color:#000;letter-spacing:-0.600px">DN_DRIVER_LOADED</div>
<div class="t" style="left:663px;top:66px;color:#000;letter-spacing:-0.444px">DN_STARTED</div>
<div class="t" style="left:663px;top:80px;color:#000;letter-spacing:-0.364px">DN_REMOVABLE</div>
<div class="t" style="left:663px;top:94px;color:#000;letter-spacing:-0.667px">DN_NT_ENUMERATOR</div>
<div class="t" style="left:663px;top:108px;color:#000;letter-spacing:-0.636px">DN_NT_DRIVER</div>
<div class="b" style="left:442px;top:392px;color:#000;letter-spacing:0.188px">Connection Status</div>
<div class="t" style="left:572px;top:392px;color:#000;letter-spacing:0.000px">Device connected</div>
<div class="b" style="left:442px;top:406px;color:#000;letter-spacing:0.250px">Current Configuration</div>
<div class="t" style="left:572px;top:406px;color:#000;letter-spacing:0.000px">1</div>
<div class="b" style="left:442px;top:420px;color:#000;letter-spacing:0.250px">Speed</div>
<div class="t" style="left:572px;top:420px;color:#000;letter-spacing:0.000px">Full</div>
<div class="b" style="left:442px;top:434px;color:#000;letter-spacing:0.308px">Device Address</div>
<div class="t" style="left:573px;top:434px;color:#000;letter-spacing:-1.000px">3</div>
<div class="b" style="left:442px;top:448px;color:#000;letter-spacing:0.211px">Number Of Open Pipes</div>
<div class="t" style="left:573px;top:448px;color:#000;letter-spacing:-1.000px">5</div>
<div class="b" style="left:439px;top:474px;color:#000;letter-spacing:0.188px">Device Descriptor</div>
<div class="t" style="left:540px;top:474px;color:#000;letter-spacing:-0.038px">Soarer&#x27;s Keyboard Converter</div>
<div class="t" style="left:443px;top:493px;color:#fff;letter-spacing:0.400px">Offset</div>
<div class="t" style="left:481px;top:493px;color:#fff;letter-spacing:-0.500px">Field</div>
<div class="t" style="left:584px;top:493px;color:#fff;letter-spacing:0.333px">Size</div>
<div class="t" style="left:613px;top:493px;color:#fff;letter-spacing:0.250px">Value</div>
<div class="t" style="left:653px;top:493px;color:#fff;letter-spacing:0.000px">Description</div>
<div class="t" style="left:481px;top:509px;color:#000;letter-spacing:-0.333px">bLength</div>
<div class="t" style="left:481px;top:523px;color:#000;letter-spacing:-0.071px">bDescriptorType</div>
<div class="t" style="left:653px;top:523px;color:#000;letter-spacing:-0.200px">Device</div>
<div class="t" style="left:481px;top:537px;color:#000;letter-spacing:-0.400px">bcdUSB</div>
<div class="t" style="left:653px;top:537px;color:#000;letter-spacing:-0.182px">USB Spec 2.0</div>
<div class="t" style="left:481px;top:551px;color:#000;letter-spacing:-0.182px">bDeviceClass</div>
<div class="t" style="left:654px;top:551px;color:#000;letter-spacing:-0.036px">Class info in Ifc Descriptors</div>
<div class="t" style="left:481px;top:565px;color:#000;letter-spacing:-0.214px">bDeviceSubClass</div>
<div class="t" style="left:481px;top:579px;color:#000;letter-spacing:-0.143px">bDeviceProtocol</div>
<div class="t" style="left:481px;top:593px;color:#000;letter-spacing:-0.286px">bMaxPacketSize0</div>
<div class="t" style="left:654px;top:593px;color:#000;letter-spacing:0.000px">32 bytes</div>
<div class="t" style="left:481px;top:607px;color:#000;letter-spacing:-0.143px">idVendor</div>
<div class="t" style="left:654px;top:607px;color:#000;letter-spacing:-0.333px">VOTI</div>
<div class="t" style="left:481px;top:621px;color:#000;letter-spacing:-0.250px">idProduct</div>
<div class="t" style="left:481px;top:635px;color:#000;letter-spacing:-0.125px">bcdDevice</div>
<div class="t" style="left:653px;top:635px;color:#000;letter-spacing:0.000px">1.00</div>
<div class="t" style="left:481px;top:649px;color:#000;letter-spacing:-0.083px">iManufacturer</div>
<div class="t" style="left:654px;top:649px;color:#000;letter-spacing:-0.143px">&quot;Soarer&quot;</div>
<div class="t" style="left:481px;top:663px;color:#000;letter-spacing:-0.429px">iProduct</div>
<div class="t" style="left:654px;top:663px;color:#000;letter-spacing:-0.036px">&quot;Soarer&#x27;s Keyboard Converter&quot;</div>
<div class="m" style="left:463.00px;top:509px;letter-spacing:0.4px">0</div>
<div class="m" style="left:595.00px;top:509px;letter-spacing:0.4px">1</div>
<div class="m" style="left:627.20px;top:509px;letter-spacing:0.4px">12h</div>
<div class="m" style="left:463.00px;top:523px;letter-spacing:0.4px">1</div>
<div class="m" style="left:595.00px;top:523px;letter-spacing:0.4px">1</div>
<div class="m" style="left:627.20px;top:523px;letter-spacing:0.4px">01h</div>
<div class="m" style="left:463.00px;top:537px;letter-spacing:0.4px">2</div>
<div class="m" style="left:595.00px;top:537px;letter-spacing:0.4px">2</div>
<div class="m" style="left:612.40px;top:537px;letter-spacing:0.4px">0200h</div>
<div class="m" style="left:463.00px;top:551px;letter-spacing:0.4px">4</div>
<div class="m" style="left:595.00px;top:551px;letter-spacing:0.4px">1</div>
<div class="m" style="left:627.20px;top:551px;letter-spacing:0.4px">00h</div>
<div class="m" style="left:463.00px;top:565px;letter-spacing:0.4px">5</div>
<div class="m" style="left:595.00px;top:565px;letter-spacing:0.4px">1</div>
<div class="m" style="left:627.20px;top:565px;letter-spacing:0.4px">00h</div>
<div class="m" style="left:463.00px;top:579px;letter-spacing:0.4px">6</div>
<div class="m" style="left:595.00px;top:579px;letter-spacing:0.4px">1</div>
<div class="m" style="left:627.20px;top:579px;letter-spacing:0.4px">00h</div>
<div class="m" style="left:463.00px;top:593px;letter-spacing:0.4px">7</div>
<div class="m" style="left:595.00px;top:593px;letter-spacing:0.4px">1</div>
<div class="m" style="left:627.20px;top:593px;letter-spacing:0.4px">20h</div>
<div class="m" style="left:463.00px;top:607px;letter-spacing:0.4px">8</div>
<div class="m" style="left:595.00px;top:607px;letter-spacing:0.4px">2</div>
<div class="m" style="left:612.40px;top:607px;letter-spacing:0.4px">16C0h</div>
<div class="m" style="left:455.60px;top:621px;letter-spacing:0.4px">10</div>
<div class="m" style="left:595.00px;top:621px;letter-spacing:0.4px">2</div>
<div class="m" style="left:612.40px;top:621px;letter-spacing:0.4px">047Dh</div>
<div class="m" style="left:455.60px;top:635px;letter-spacing:0.4px">12</div>
<div class="m" style="left:595.00px;top:635px;letter-spacing:0.4px">2</div>
<div class="m" style="left:612.40px;top:635px;letter-spacing:0.4px">0100h</div>
<div class="m" style="left:455.60px;top:649px;letter-spacing:0.4px">14</div>
<div class="m" style="left:595.00px;top:649px;letter-spacing:0.4px">1</div>
<div class="m" style="left:627.20px;top:649px;letter-spacing:0.4px">01h</div>
<div class="m" style="left:455.60px;top:663px;letter-spacing:0.4px">15</div>
<div class="m" style="left:595.00px;top:663px;letter-spacing:0.4px">1</div>
<div class="m" style="left:627.20px;top:663px;letter-spacing:0.4px">02h</div>
</body></html>
